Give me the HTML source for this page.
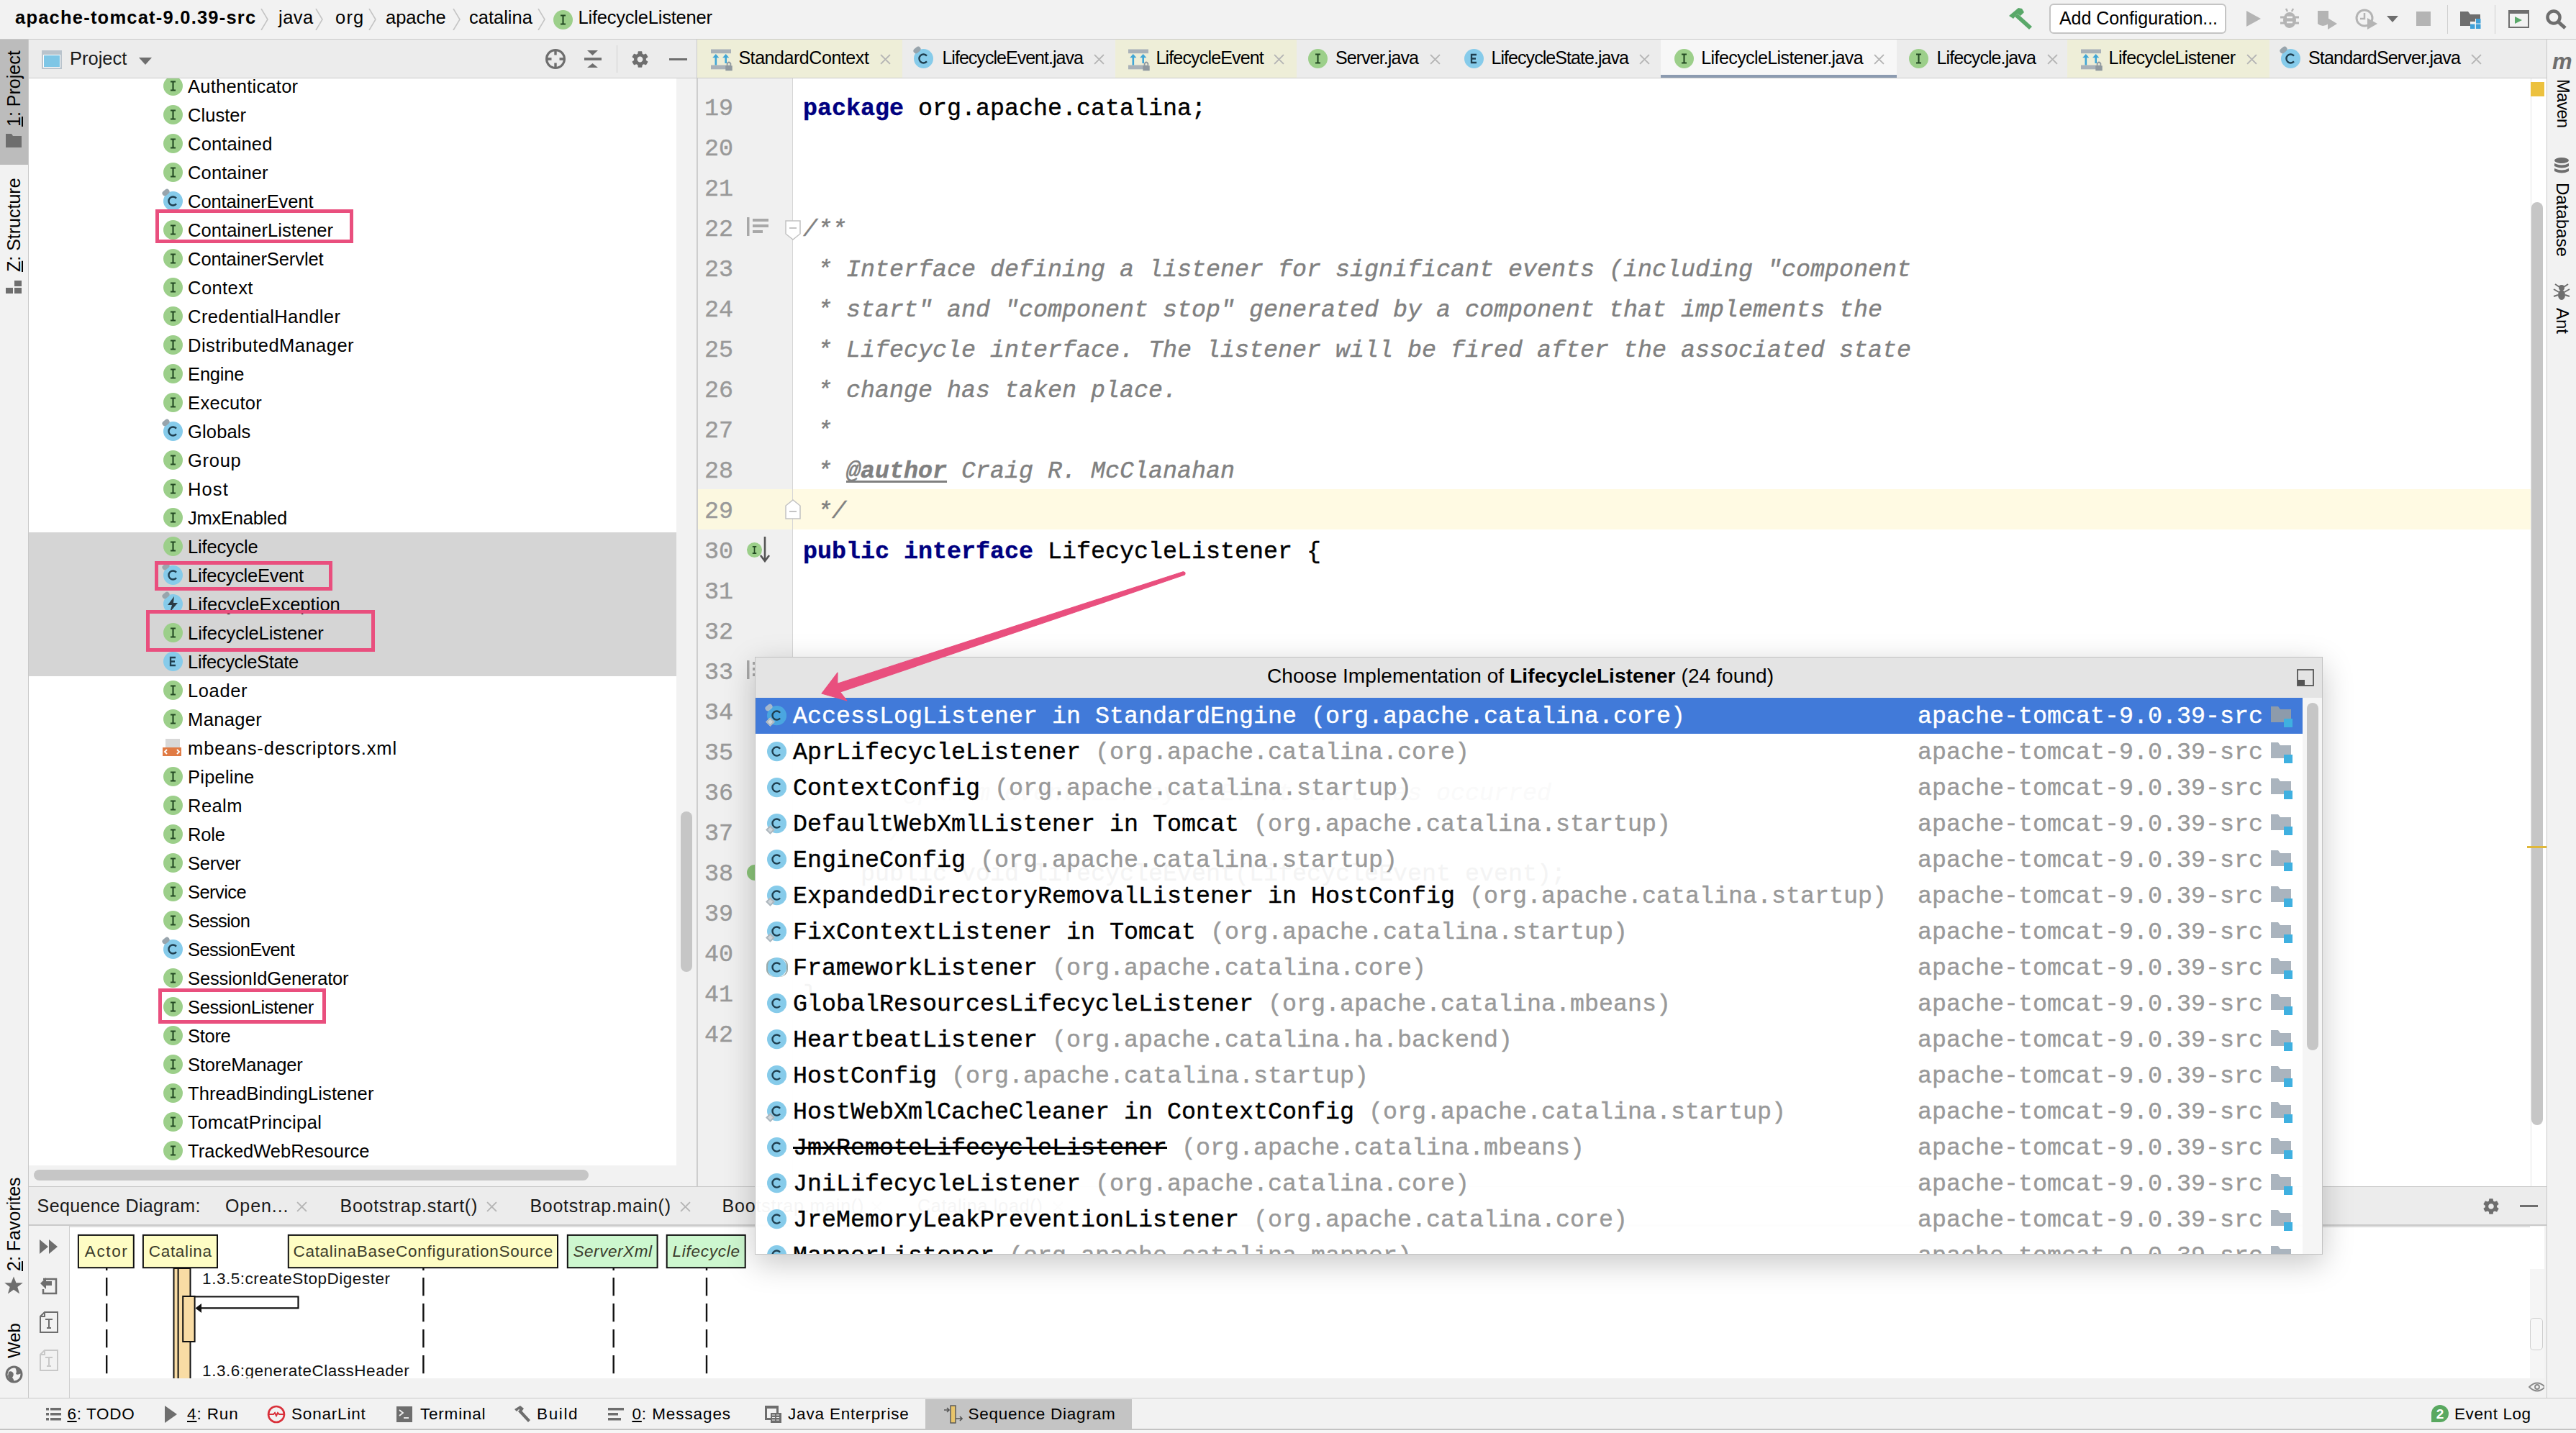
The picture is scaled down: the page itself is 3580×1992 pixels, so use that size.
<!DOCTYPE html><html><head><meta charset="utf-8"><style>

html,body{margin:0;padding:0;}
body{width:3580px;height:1992px;position:relative;overflow:hidden;background:#f2f2f2;font-family:"Liberation Sans",sans-serif;}
.a{position:absolute;}
.t{position:absolute;white-space:pre;line-height:1;}
.mono{-webkit-text-stroke:0.4px currentColor;}
.ic{border-radius:50%;text-align:center;font-family:"Liberation Sans",sans-serif;}
.vt{position:absolute;white-space:pre;line-height:1;transform-origin:0 0;}

</style></head><body>
<div class="a" style="left:0px;top:0px;width:3580px;height:54px;background:#f2f2f2;"></div>
<div class="a" style="left:0px;top:54px;width:3580px;height:1px;background:#cacaca;"></div>
<div class="t" style="left:21px;top:12.41px;font-family:'Liberation Sans', sans-serif;font-size:25.5px;color:#000;font-weight:bold;font-style:normal;letter-spacing:1.22px;">apache-tomcat-9.0.39-src</div>
<svg class="a" style="left:362px;top:12px" width="12" height="30" viewBox="0 0 12 30"><path d="M1 0L10 15.0L1 30" fill="none" stroke="#c4c4c4" stroke-width="1.6"/></svg>
<div class="t" style="left:387px;top:12.41px;font-family:'Liberation Sans', sans-serif;font-size:25.5px;color:#000;font-weight:normal;font-style:normal;letter-spacing:0.5px;">java</div>
<svg class="a" style="left:438px;top:12px" width="12" height="30" viewBox="0 0 12 30"><path d="M1 0L10 15.0L1 30" fill="none" stroke="#c4c4c4" stroke-width="1.6"/></svg>
<div class="t" style="left:466px;top:12.41px;font-family:'Liberation Sans', sans-serif;font-size:25.5px;color:#000;font-weight:normal;font-style:normal;letter-spacing:1.2px;">org</div>
<svg class="a" style="left:512px;top:12px" width="12" height="30" viewBox="0 0 12 30"><path d="M1 0L10 15.0L1 30" fill="none" stroke="#c4c4c4" stroke-width="1.6"/></svg>
<div class="t" style="left:536px;top:12.41px;font-family:'Liberation Sans', sans-serif;font-size:25.5px;color:#000;font-weight:normal;font-style:normal;letter-spacing:0px;">apache</div>
<svg class="a" style="left:629px;top:12px" width="12" height="30" viewBox="0 0 12 30"><path d="M1 0L10 15.0L1 30" fill="none" stroke="#c4c4c4" stroke-width="1.6"/></svg>
<div class="t" style="left:652px;top:12.41px;font-family:'Liberation Sans', sans-serif;font-size:25.5px;color:#000;font-weight:normal;font-style:normal;letter-spacing:0px;">catalina</div>
<svg class="a" style="left:747px;top:12px" width="12" height="30" viewBox="0 0 12 30"><path d="M1 0L10 15.0L1 30" fill="none" stroke="#c4c4c4" stroke-width="1.6"/></svg>
<svg class="a" style="left:768.5px;top:13.5px" width="27" height="27" viewBox="0 0 27 27"><circle cx="13.5" cy="13.5" r="13.5" fill="#9ccf8a"/><path d="M10 7.5H17M13.5 7.5V19.5M10 19.5H17" stroke="#234a23" stroke-width="2.1" fill="none"/></svg>
<div class="t" style="left:803.5px;top:12.41px;font-family:'Liberation Sans', sans-serif;font-size:25.5px;color:#000;font-weight:normal;font-style:normal;letter-spacing:-0.22px;">LifecycleListener</div>
<svg class="a" style="left:2792px;top:11px" width="34" height="30" viewBox="0 0 34 30"><path d="M0 11 L13 0 L18 1 L21 6 L16 11 L12 8 L6 15 Z" fill="#59a869"/><path d="M12 8 L32 26 L28 30 L8 12 Z" fill="#59a869"/></svg>
<div class="a" style="left:2848px;top:4.5px;width:246px;height:42.5px;background:#fff;border:2px solid #c4c4c4;border-radius:6px;box-sizing:border-box;"></div>
<div class="t" style="left:2862px;top:12.84px;font-family:'Liberation Sans', sans-serif;font-size:25px;color:#000;font-weight:normal;font-style:normal;letter-spacing:-0.05px;">Add Configuration...</div>
<svg class="a" style="left:3120px;top:13px" width="26" height="26" viewBox="0 0 26 26"><path d="M2 2L22 13L2 24Z" fill="#b4b4b4"/></svg>
<svg class="a" style="left:3169px;top:11px" width="26" height="29" viewBox="0 0 26 29"><path d="M8 1L10 5M18 1L16 5" stroke="#b4b4b4" stroke-width="2.5"/><ellipse cx="13" cy="17" rx="9" ry="11" fill="#b4b4b4"/><path d="M0 13H26M0 21H26" stroke="#b4b4b4" stroke-width="3"/><path d="M9 13H17M9 20H17" stroke="#f2f2f2" stroke-width="2.5"/></svg>
<svg class="a" style="left:3218px;top:11px" width="34" height="32" viewBox="0 0 34 32"><path d="M3 4 H18 V22 Q10 28 3 22 Z" fill="#b4b4b4"/><path d="M17 14 L30 22 L17 30 Z" fill="#b4b4b4"/></svg>
<svg class="a" style="left:3272px;top:11px" width="34" height="32" viewBox="0 0 34 32"><circle cx="14" cy="14" r="11" fill="none" stroke="#b4b4b4" stroke-width="3"/><path d="M14 7V15H8" stroke="#b4b4b4" stroke-width="2.5" fill="none"/><path d="M18 14 L32 22 L18 30 Z" fill="#b4b4b4"/></svg>
<svg class="a" style="left:3317px;top:22px" width="16" height="10" viewBox="0 0 16 10"><path d="M0 0H16L8 9Z" fill="#6e6e6e"/></svg>
<div class="a" style="left:3358px;top:16px;width:20px;height:20px;background:#b4b4b4;"></div>
<div class="a" style="left:3401px;top:7px;width:1px;height:40px;background:#d0d0d0;"></div>
<svg class="a" style="left:3419px;top:16px" width="30" height="24" viewBox="0 0 30 24"><path d="M0 0H11L14 4H28V10H21V14H14V20H0Z" fill="#6e6e6e"/><rect x="14" y="17.5" width="6.5" height="6.5" fill="#40a0d8"/><rect x="22" y="10" width="6.5" height="6.5" fill="#40a0d8"/><rect x="22" y="17.5" width="6.5" height="6.5" fill="#40a0d8"/></svg>
<div class="a" style="left:3467px;top:7px;width:1px;height:40px;background:#d0d0d0;"></div>
<svg class="a" style="left:3486px;top:14px" width="30" height="26" viewBox="0 0 30 26"><rect x="1" y="1" width="27" height="23" fill="none" stroke="#6e6e6e" stroke-width="2"/><rect x="1" y="1" width="27" height="4" fill="#6e6e6e"/><path d="M9 9L19 14L9 19Z" fill="#59a869"/></svg>
<svg class="a" style="left:3537px;top:12px" width="32" height="32" viewBox="0 0 32 32"><circle cx="12" cy="12" r="8.5" fill="none" stroke="#6e6e6e" stroke-width="4.5"/><path d="M18 18L28 27" stroke="#6e6e6e" stroke-width="5"/></svg>
<div class="a" style="left:0px;top:55px;width:39px;height:1888px;background:#f2f2f2;"></div>
<div class="a" style="left:39px;top:55px;width:1px;height:1888px;background:#c9c9c9;"></div>
<div class="a" style="left:0px;top:55px;width:39px;height:174px;background:#bcbcbc;"></div>
<div class="vt" style="left:7px;top:176px;font-size:25px;color:#000;transform:rotate(-90deg);"><u>1</u>: Project</div>
<svg class="a" style="left:8px;top:186px" width="22" height="19" viewBox="0 0 22 19"><path d="M0 0H8L10 3H22V19H0Z" fill="#6e6e6e"/></svg>
<div class="vt" style="left:7px;top:378px;font-size:25px;color:#000;transform:rotate(-90deg);"><u>Z</u>: Structure</div>
<svg class="a" style="left:8px;top:390px" width="22" height="18" viewBox="0 0 22 18"><rect x="12" y="0" width="10" height="8" fill="#6e6e6e"/><rect x="0" y="10" width="10" height="8" fill="#6e6e6e"/><rect x="12" y="10" width="10" height="8" fill="#6e6e6e"/></svg>
<div class="vt" style="left:7px;top:1767px;font-size:25px;color:#000;transform:rotate(-90deg);"><u>2</u>: Favorites</div>
<svg class="a" style="left:6px;top:1774px" width="26" height="26" viewBox="0 0 24 24"><path d="M12 0.5L15.2 8.6H23.8L16.9 13.9L19.5 22.5L12 17.2L4.5 22.5L7.1 13.9L0.2 8.6H8.8Z" fill="#6e6e6e"/></svg>
<div class="vt" style="left:8px;top:1888px;font-size:24px;color:#000;transform:rotate(-90deg);">Web</div>
<svg class="a" style="left:7px;top:1898px" width="25" height="25" viewBox="0 0 25 25"><circle cx="12.5" cy="12.5" r="10.5" fill="none" stroke="#6e6e6e" stroke-width="3"/><path d="M5 9Q9 7 11 10T10 17Q13 20 12 23Q6 21 4 15Z M14 3Q20 5 22 11Q18 14 15 12Q17 8 14 3Z" fill="#6e6e6e"/></svg>
<div class="a" style="left:40px;top:109px;width:900px;height:1511px;background:#ffffff;"></div>
<div class="a" style="left:40px;top:739.5px;width:900px;height:200px;background:#d5d5d5;"></div>
<div class="a" style="left:40px;top:109px;width:900px;height:1511px;overflow:hidden;">
<svg class="a" style="left:186.5px;top:-3.0px" width="27" height="27" viewBox="0 0 27 27"><circle cx="13.5" cy="13.5" r="13.5" fill="#9ccf8a"/><path d="M10 7.5H17M13.5 7.5V19.5M10 19.5H17" stroke="#234a23" stroke-width="2.1" fill="none"/></svg>
<div class="t" style="left:221.1px;top:-1.49px;font-family:'Liberation Sans', sans-serif;font-size:25.5px;color:#000;font-weight:normal;font-style:normal;letter-spacing:0.225px;">Authenticator</div>
<svg class="a" style="left:186.5px;top:37.0px" width="27" height="27" viewBox="0 0 27 27"><circle cx="13.5" cy="13.5" r="13.5" fill="#9ccf8a"/><path d="M10 7.5H17M13.5 7.5V19.5M10 19.5H17" stroke="#234a23" stroke-width="2.1" fill="none"/></svg>
<div class="t" style="left:221.1px;top:38.51px;font-family:'Liberation Sans', sans-serif;font-size:25.5px;color:#000;font-weight:normal;font-style:normal;letter-spacing:0.017px;">Cluster</div>
<svg class="a" style="left:186.5px;top:77.0px" width="27" height="27" viewBox="0 0 27 27"><circle cx="13.5" cy="13.5" r="13.5" fill="#9ccf8a"/><path d="M10 7.5H17M13.5 7.5V19.5M10 19.5H17" stroke="#234a23" stroke-width="2.1" fill="none"/></svg>
<div class="t" style="left:221.1px;top:78.51px;font-family:'Liberation Sans', sans-serif;font-size:25.5px;color:#000;font-weight:normal;font-style:normal;letter-spacing:0.125px;">Contained</div>
<svg class="a" style="left:186.5px;top:117.0px" width="27" height="27" viewBox="0 0 27 27"><circle cx="13.5" cy="13.5" r="13.5" fill="#9ccf8a"/><path d="M10 7.5H17M13.5 7.5V19.5M10 19.5H17" stroke="#234a23" stroke-width="2.1" fill="none"/></svg>
<div class="t" style="left:221.1px;top:118.51px;font-family:'Liberation Sans', sans-serif;font-size:25.5px;color:#000;font-weight:normal;font-style:normal;letter-spacing:0.1px;">Container</div>
<svg class="a" style="left:186.5px;top:157.0px" width="27" height="27" viewBox="0 0 27 27"><circle cx="13.5" cy="13.5" r="13.5" fill="#86cbea"/><path d="M18 9.6A6 6 0 1 0 18 17.4" stroke="#1f3f50" stroke-width="2.4" fill="none"/></svg>
<div class="a" style="left:185.0px;top:154.5px;width:11px;height:7px;background:#98a4ac;border-radius:4px;transform:rotate(-40deg);"></div>
<div class="t" style="left:221.1px;top:158.51px;font-family:'Liberation Sans', sans-serif;font-size:25.5px;color:#000;font-weight:normal;font-style:normal;letter-spacing:-0.108px;">ContainerEvent</div>
<svg class="a" style="left:186.5px;top:197.0px" width="27" height="27" viewBox="0 0 27 27"><circle cx="13.5" cy="13.5" r="13.5" fill="#9ccf8a"/><path d="M10 7.5H17M13.5 7.5V19.5M10 19.5H17" stroke="#234a23" stroke-width="2.1" fill="none"/></svg>
<div class="t" style="left:221.1px;top:198.51px;font-family:'Liberation Sans', sans-serif;font-size:25.5px;color:#000;font-weight:normal;font-style:normal;letter-spacing:0.044px;">ContainerListener</div>
<svg class="a" style="left:186.5px;top:237.0px" width="27" height="27" viewBox="0 0 27 27"><circle cx="13.5" cy="13.5" r="13.5" fill="#9ccf8a"/><path d="M10 7.5H17M13.5 7.5V19.5M10 19.5H17" stroke="#234a23" stroke-width="2.1" fill="none"/></svg>
<div class="t" style="left:221.1px;top:238.51px;font-family:'Liberation Sans', sans-serif;font-size:25.5px;color:#000;font-weight:normal;font-style:normal;letter-spacing:-0.093px;">ContainerServlet</div>
<svg class="a" style="left:186.5px;top:277.0px" width="27" height="27" viewBox="0 0 27 27"><circle cx="13.5" cy="13.5" r="13.5" fill="#9ccf8a"/><path d="M10 7.5H17M13.5 7.5V19.5M10 19.5H17" stroke="#234a23" stroke-width="2.1" fill="none"/></svg>
<div class="t" style="left:221.1px;top:278.51px;font-family:'Liberation Sans', sans-serif;font-size:25.5px;color:#000;font-weight:normal;font-style:normal;letter-spacing:0.4px;">Context</div>
<svg class="a" style="left:186.5px;top:317.0px" width="27" height="27" viewBox="0 0 27 27"><circle cx="13.5" cy="13.5" r="13.5" fill="#9ccf8a"/><path d="M10 7.5H17M13.5 7.5V19.5M10 19.5H17" stroke="#234a23" stroke-width="2.1" fill="none"/></svg>
<div class="t" style="left:221.1px;top:318.51px;font-family:'Liberation Sans', sans-serif;font-size:25.5px;color:#000;font-weight:normal;font-style:normal;letter-spacing:0.394px;">CredentialHandler</div>
<svg class="a" style="left:186.5px;top:357.0px" width="27" height="27" viewBox="0 0 27 27"><circle cx="13.5" cy="13.5" r="13.5" fill="#9ccf8a"/><path d="M10 7.5H17M13.5 7.5V19.5M10 19.5H17" stroke="#234a23" stroke-width="2.1" fill="none"/></svg>
<div class="t" style="left:221.1px;top:358.51px;font-family:'Liberation Sans', sans-serif;font-size:25.5px;color:#000;font-weight:normal;font-style:normal;letter-spacing:0.465px;">DistributedManager</div>
<svg class="a" style="left:186.5px;top:397.0px" width="27" height="27" viewBox="0 0 27 27"><circle cx="13.5" cy="13.5" r="13.5" fill="#9ccf8a"/><path d="M10 7.5H17M13.5 7.5V19.5M10 19.5H17" stroke="#234a23" stroke-width="2.1" fill="none"/></svg>
<div class="t" style="left:221.1px;top:398.51px;font-family:'Liberation Sans', sans-serif;font-size:25.5px;color:#000;font-weight:normal;font-style:normal;letter-spacing:-0.22px;">Engine</div>
<svg class="a" style="left:186.5px;top:437.0px" width="27" height="27" viewBox="0 0 27 27"><circle cx="13.5" cy="13.5" r="13.5" fill="#9ccf8a"/><path d="M10 7.5H17M13.5 7.5V19.5M10 19.5H17" stroke="#234a23" stroke-width="2.1" fill="none"/></svg>
<div class="t" style="left:221.1px;top:438.51px;font-family:'Liberation Sans', sans-serif;font-size:25.5px;color:#000;font-weight:normal;font-style:normal;letter-spacing:0.286px;">Executor</div>
<svg class="a" style="left:186.5px;top:477.0px" width="27" height="27" viewBox="0 0 27 27"><circle cx="13.5" cy="13.5" r="13.5" fill="#86cbea"/><path d="M18 9.6A6 6 0 1 0 18 17.4" stroke="#1f3f50" stroke-width="2.4" fill="none"/></svg>
<div class="a" style="left:185.0px;top:474.5px;width:11px;height:7px;background:#98a4ac;border-radius:4px;transform:rotate(-40deg);"></div>
<div class="t" style="left:221.1px;top:478.51px;font-family:'Liberation Sans', sans-serif;font-size:25.5px;color:#000;font-weight:normal;font-style:normal;letter-spacing:0.117px;">Globals</div>
<svg class="a" style="left:186.5px;top:517.0px" width="27" height="27" viewBox="0 0 27 27"><circle cx="13.5" cy="13.5" r="13.5" fill="#9ccf8a"/><path d="M10 7.5H17M13.5 7.5V19.5M10 19.5H17" stroke="#234a23" stroke-width="2.1" fill="none"/></svg>
<div class="t" style="left:221.1px;top:518.51px;font-family:'Liberation Sans', sans-serif;font-size:25.5px;color:#000;font-weight:normal;font-style:normal;letter-spacing:0.675px;">Group</div>
<svg class="a" style="left:186.5px;top:557.0px" width="27" height="27" viewBox="0 0 27 27"><circle cx="13.5" cy="13.5" r="13.5" fill="#9ccf8a"/><path d="M10 7.5H17M13.5 7.5V19.5M10 19.5H17" stroke="#234a23" stroke-width="2.1" fill="none"/></svg>
<div class="t" style="left:221.1px;top:558.51px;font-family:'Liberation Sans', sans-serif;font-size:25.5px;color:#000;font-weight:normal;font-style:normal;letter-spacing:1.067px;">Host</div>
<svg class="a" style="left:186.5px;top:597.0px" width="27" height="27" viewBox="0 0 27 27"><circle cx="13.5" cy="13.5" r="13.5" fill="#9ccf8a"/><path d="M10 7.5H17M13.5 7.5V19.5M10 19.5H17" stroke="#234a23" stroke-width="2.1" fill="none"/></svg>
<div class="t" style="left:221.1px;top:598.51px;font-family:'Liberation Sans', sans-serif;font-size:25.5px;color:#000;font-weight:normal;font-style:normal;letter-spacing:-0.244px;">JmxEnabled</div>
<svg class="a" style="left:186.5px;top:637.0px" width="27" height="27" viewBox="0 0 27 27"><circle cx="13.5" cy="13.5" r="13.5" fill="#9ccf8a"/><path d="M10 7.5H17M13.5 7.5V19.5M10 19.5H17" stroke="#234a23" stroke-width="2.1" fill="none"/></svg>
<div class="t" style="left:221.1px;top:638.51px;font-family:'Liberation Sans', sans-serif;font-size:25.5px;color:#000;font-weight:normal;font-style:normal;letter-spacing:-0.2px;">Lifecycle</div>
<svg class="a" style="left:186.5px;top:677.0px" width="27" height="27" viewBox="0 0 27 27"><circle cx="13.5" cy="13.5" r="13.5" fill="#86cbea"/><path d="M18 9.6A6 6 0 1 0 18 17.4" stroke="#1f3f50" stroke-width="2.4" fill="none"/></svg>
<div class="a" style="left:185.0px;top:674.5px;width:11px;height:7px;background:#98a4ac;border-radius:4px;transform:rotate(-40deg);"></div>
<div class="t" style="left:221.1px;top:678.51px;font-family:'Liberation Sans', sans-serif;font-size:25.5px;color:#000;font-weight:normal;font-style:normal;letter-spacing:-0.262px;">LifecycleEvent</div>
<div class="a ic" style="left:186.5px;top:717.0px;width:27px;height:27px;background:#86cbea;"></div>
<svg class="a" style="left:191px;top:719.5px" width="18" height="22" viewBox="0 0 18 22"><path d="M11 0L2 12H8L5 22L16 9H10Z" fill="#2a3a44"/></svg>
<div class="a" style="left:185px;top:714.5px;width:11px;height:7px;background:#98a4ac;border-radius:4px;transform:rotate(-40deg);"></div>
<div class="t" style="left:221.1px;top:718.51px;font-family:'Liberation Sans', sans-serif;font-size:25.5px;color:#000;font-weight:normal;font-style:normal;letter-spacing:0.029px;">LifecycleException</div>
<svg class="a" style="left:186.5px;top:757.0px" width="27" height="27" viewBox="0 0 27 27"><circle cx="13.5" cy="13.5" r="13.5" fill="#9ccf8a"/><path d="M10 7.5H17M13.5 7.5V19.5M10 19.5H17" stroke="#234a23" stroke-width="2.1" fill="none"/></svg>
<div class="t" style="left:221.1px;top:758.51px;font-family:'Liberation Sans', sans-serif;font-size:25.5px;color:#000;font-weight:normal;font-style:normal;letter-spacing:-0.081px;">LifecycleListener</div>
<svg class="a" style="left:186.5px;top:797.0px" width="27" height="27" viewBox="0 0 27 27"><circle cx="13.5" cy="13.5" r="13.5" fill="#86cbea"/><path d="M17 8H10V19H17M10 13.5H16" stroke="#1f3f50" stroke-width="2.3" fill="none"/></svg>
<div class="t" style="left:221.1px;top:798.51px;font-family:'Liberation Sans', sans-serif;font-size:25.5px;color:#000;font-weight:normal;font-style:normal;letter-spacing:-0.362px;">LifecycleState</div>
<svg class="a" style="left:186.5px;top:837.0px" width="27" height="27" viewBox="0 0 27 27"><circle cx="13.5" cy="13.5" r="13.5" fill="#9ccf8a"/><path d="M10 7.5H17M13.5 7.5V19.5M10 19.5H17" stroke="#234a23" stroke-width="2.1" fill="none"/></svg>
<div class="t" style="left:221.1px;top:838.51px;font-family:'Liberation Sans', sans-serif;font-size:25.5px;color:#000;font-weight:normal;font-style:normal;letter-spacing:0.58px;">Loader</div>
<svg class="a" style="left:186.5px;top:877.0px" width="27" height="27" viewBox="0 0 27 27"><circle cx="13.5" cy="13.5" r="13.5" fill="#9ccf8a"/><path d="M10 7.5H17M13.5 7.5V19.5M10 19.5H17" stroke="#234a23" stroke-width="2.1" fill="none"/></svg>
<div class="t" style="left:221.1px;top:878.51px;font-family:'Liberation Sans', sans-serif;font-size:25.5px;color:#000;font-weight:normal;font-style:normal;letter-spacing:0.333px;">Manager</div>
<svg class="a" style="left:186px;top:917.5px" width="28" height="26" viewBox="0 0 28 26"><rect x="4" y="0" width="20" height="24" fill="#d8d8d8"/><rect x="0" y="12" width="26" height="12" fill="#e07b45"/><path d="M6 15L3 18L6 21M20 15L23 18L20 21" stroke="#fff" stroke-width="2" fill="none"/></svg>
<div class="t" style="left:221.1px;top:918.51px;font-family:'Liberation Sans', sans-serif;font-size:25.5px;color:#000;font-weight:normal;font-style:normal;letter-spacing:0.924px;">mbeans-descriptors.xml</div>
<svg class="a" style="left:186.5px;top:957.0px" width="27" height="27" viewBox="0 0 27 27"><circle cx="13.5" cy="13.5" r="13.5" fill="#9ccf8a"/><path d="M10 7.5H17M13.5 7.5V19.5M10 19.5H17" stroke="#234a23" stroke-width="2.1" fill="none"/></svg>
<div class="t" style="left:221.1px;top:958.51px;font-family:'Liberation Sans', sans-serif;font-size:25.5px;color:#000;font-weight:normal;font-style:normal;letter-spacing:0.2px;">Pipeline</div>
<svg class="a" style="left:186.5px;top:997.0px" width="27" height="27" viewBox="0 0 27 27"><circle cx="13.5" cy="13.5" r="13.5" fill="#9ccf8a"/><path d="M10 7.5H17M13.5 7.5V19.5M10 19.5H17" stroke="#234a23" stroke-width="2.1" fill="none"/></svg>
<div class="t" style="left:221.1px;top:998.51px;font-family:'Liberation Sans', sans-serif;font-size:25.5px;color:#000;font-weight:normal;font-style:normal;letter-spacing:0.4px;">Realm</div>
<svg class="a" style="left:186.5px;top:1037.0px" width="27" height="27" viewBox="0 0 27 27"><circle cx="13.5" cy="13.5" r="13.5" fill="#9ccf8a"/><path d="M10 7.5H17M13.5 7.5V19.5M10 19.5H17" stroke="#234a23" stroke-width="2.1" fill="none"/></svg>
<div class="t" style="left:221.1px;top:1038.51px;font-family:'Liberation Sans', sans-serif;font-size:25.5px;color:#000;font-weight:normal;font-style:normal;letter-spacing:-0.2px;">Role</div>
<svg class="a" style="left:186.5px;top:1077.0px" width="27" height="27" viewBox="0 0 27 27"><circle cx="13.5" cy="13.5" r="13.5" fill="#9ccf8a"/><path d="M10 7.5H17M13.5 7.5V19.5M10 19.5H17" stroke="#234a23" stroke-width="2.1" fill="none"/></svg>
<div class="t" style="left:221.1px;top:1078.51px;font-family:'Liberation Sans', sans-serif;font-size:25.5px;color:#000;font-weight:normal;font-style:normal;letter-spacing:-0.28px;">Server</div>
<svg class="a" style="left:186.5px;top:1117.0px" width="27" height="27" viewBox="0 0 27 27"><circle cx="13.5" cy="13.5" r="13.5" fill="#9ccf8a"/><path d="M10 7.5H17M13.5 7.5V19.5M10 19.5H17" stroke="#234a23" stroke-width="2.1" fill="none"/></svg>
<div class="t" style="left:221.1px;top:1118.51px;font-family:'Liberation Sans', sans-serif;font-size:25.5px;color:#000;font-weight:normal;font-style:normal;letter-spacing:-0.583px;">Service</div>
<svg class="a" style="left:186.5px;top:1157.0px" width="27" height="27" viewBox="0 0 27 27"><circle cx="13.5" cy="13.5" r="13.5" fill="#9ccf8a"/><path d="M10 7.5H17M13.5 7.5V19.5M10 19.5H17" stroke="#234a23" stroke-width="2.1" fill="none"/></svg>
<div class="t" style="left:221.1px;top:1158.51px;font-family:'Liberation Sans', sans-serif;font-size:25.5px;color:#000;font-weight:normal;font-style:normal;letter-spacing:-0.667px;">Session</div>
<svg class="a" style="left:186.5px;top:1197.0px" width="27" height="27" viewBox="0 0 27 27"><circle cx="13.5" cy="13.5" r="13.5" fill="#86cbea"/><path d="M18 9.6A6 6 0 1 0 18 17.4" stroke="#1f3f50" stroke-width="2.4" fill="none"/></svg>
<div class="a" style="left:185.0px;top:1194.5px;width:11px;height:7px;background:#98a4ac;border-radius:4px;transform:rotate(-40deg);"></div>
<div class="t" style="left:221.1px;top:1198.51px;font-family:'Liberation Sans', sans-serif;font-size:25.5px;color:#000;font-weight:normal;font-style:normal;letter-spacing:-0.664px;">SessionEvent</div>
<svg class="a" style="left:186.5px;top:1237.0px" width="27" height="27" viewBox="0 0 27 27"><circle cx="13.5" cy="13.5" r="13.5" fill="#9ccf8a"/><path d="M10 7.5H17M13.5 7.5V19.5M10 19.5H17" stroke="#234a23" stroke-width="2.1" fill="none"/></svg>
<div class="t" style="left:221.1px;top:1238.51px;font-family:'Liberation Sans', sans-serif;font-size:25.5px;color:#000;font-weight:normal;font-style:normal;letter-spacing:-0.2px;">SessionIdGenerator</div>
<svg class="a" style="left:186.5px;top:1277.0px" width="27" height="27" viewBox="0 0 27 27"><circle cx="13.5" cy="13.5" r="13.5" fill="#9ccf8a"/><path d="M10 7.5H17M13.5 7.5V19.5M10 19.5H17" stroke="#234a23" stroke-width="2.1" fill="none"/></svg>
<div class="t" style="left:221.1px;top:1278.51px;font-family:'Liberation Sans', sans-serif;font-size:25.5px;color:#000;font-weight:normal;font-style:normal;letter-spacing:-0.443px;">SessionListener</div>
<svg class="a" style="left:186.5px;top:1317.0px" width="27" height="27" viewBox="0 0 27 27"><circle cx="13.5" cy="13.5" r="13.5" fill="#9ccf8a"/><path d="M10 7.5H17M13.5 7.5V19.5M10 19.5H17" stroke="#234a23" stroke-width="2.1" fill="none"/></svg>
<div class="t" style="left:221.1px;top:1318.51px;font-family:'Liberation Sans', sans-serif;font-size:25.5px;color:#000;font-weight:normal;font-style:normal;letter-spacing:-0.325px;">Store</div>
<svg class="a" style="left:186.5px;top:1357.0px" width="27" height="27" viewBox="0 0 27 27"><circle cx="13.5" cy="13.5" r="13.5" fill="#9ccf8a"/><path d="M10 7.5H17M13.5 7.5V19.5M10 19.5H17" stroke="#234a23" stroke-width="2.1" fill="none"/></svg>
<div class="t" style="left:221.1px;top:1358.51px;font-family:'Liberation Sans', sans-serif;font-size:25.5px;color:#000;font-weight:normal;font-style:normal;letter-spacing:-0.182px;">StoreManager</div>
<svg class="a" style="left:186.5px;top:1397.0px" width="27" height="27" viewBox="0 0 27 27"><circle cx="13.5" cy="13.5" r="13.5" fill="#9ccf8a"/><path d="M10 7.5H17M13.5 7.5V19.5M10 19.5H17" stroke="#234a23" stroke-width="2.1" fill="none"/></svg>
<div class="t" style="left:221.1px;top:1398.51px;font-family:'Liberation Sans', sans-serif;font-size:25.5px;color:#000;font-weight:normal;font-style:normal;letter-spacing:0.085px;">ThreadBindingListener</div>
<svg class="a" style="left:186.5px;top:1437.0px" width="27" height="27" viewBox="0 0 27 27"><circle cx="13.5" cy="13.5" r="13.5" fill="#9ccf8a"/><path d="M10 7.5H17M13.5 7.5V19.5M10 19.5H17" stroke="#234a23" stroke-width="2.1" fill="none"/></svg>
<div class="t" style="left:221.1px;top:1438.51px;font-family:'Liberation Sans', sans-serif;font-size:25.5px;color:#000;font-weight:normal;font-style:normal;letter-spacing:0.421px;">TomcatPrincipal</div>
<svg class="a" style="left:186.5px;top:1477.0px" width="27" height="27" viewBox="0 0 27 27"><circle cx="13.5" cy="13.5" r="13.5" fill="#9ccf8a"/><path d="M10 7.5H17M13.5 7.5V19.5M10 19.5H17" stroke="#234a23" stroke-width="2.1" fill="none"/></svg>
<div class="t" style="left:221.1px;top:1478.51px;font-family:'Liberation Sans', sans-serif;font-size:25.5px;color:#000;font-weight:normal;font-style:normal;letter-spacing:0.0px;">TrackedWebResource</div>
</div>
<div class="a" style="left:940px;top:109px;width:28px;height:1511px;background:#f2f2f2;"></div>
<div class="a" style="left:946px;top:1128px;width:15.5px;height:223px;background:#c6c6c6;border-radius:8px;"></div>
<div class="a" style="left:40px;top:1620px;width:928px;height:29px;background:#f2f2f2;"></div>
<div class="a" style="left:47px;top:1626px;width:771px;height:15px;background:#c6c6c6;border-radius:8px;"></div>
<div class="a" style="left:968px;top:55px;width:1px;height:1594px;background:#c9c9c9;"></div>
<div class="a" style="left:40px;top:55px;width:928px;height:54px;background:#ececec;"></div>
<div class="a" style="left:40px;top:108px;width:928px;height:1px;background:#c9c9c9;"></div>
<svg class="a" style="left:58px;top:70px" width="28" height="26" viewBox="0 0 28 26"><rect x="0" y="0" width="28" height="26" fill="#b9c3cc"/><rect x="2" y="6" width="24" height="18" fill="#ffffff"/><rect x="3" y="7" width="22" height="16" fill="#7ec6e6"/></svg>
<div class="t" style="left:97px;top:69.41px;font-family:'Liberation Sans', sans-serif;font-size:25.5px;color:#1a1a1a;font-weight:normal;font-style:normal;letter-spacing:0px;">Project</div>
<svg class="a" style="left:193px;top:80px" width="18" height="11" viewBox="0 0 18 11"><path d="M0 0H18L9 10Z" fill="#6e6e6e"/></svg>
<svg class="a" style="left:757px;top:67px" width="30" height="30" viewBox="0 0 30 30"><circle cx="15" cy="15" r="12.4" fill="none" stroke="#6e6e6e" stroke-width="3.2"/><path d="M15 2V9.5M15 20.5V28M2 15H9.5M20.5 15H28" stroke="#6e6e6e" stroke-width="3.4"/></svg>
<svg class="a" style="left:812px;top:69px" width="25" height="26" viewBox="0 0 25 26"><rect x="0" y="11.2" width="24" height="3.7" fill="#6e6e6e"/><path d="M4 1H19L11.5 8Z M4 25H19L11.5 19Z" fill="#6e6e6e"/></svg>
<div class="a" style="left:857px;top:63px;width:1px;height:38px;background:#d0d0d0;"></div>
<svg class="a" style="left:876px;top:69px" width="27" height="27" viewBox="0 0 24 24"><path fill="#6e6e6e" d="M19.4 13c.04-.33.06-.66.06-1s-.02-.67-.06-1l2.1-1.65c.19-.15.24-.42.12-.64l-2-3.46c-.12-.22-.39-.3-.61-.22l-2.49 1c-.52-.4-1.08-.73-1.69-.98l-.38-2.65C14.46 2.18 14.25 2 14 2h-4c-.25 0-.46.18-.49.42l-.38 2.65c-.61.25-1.17.59-1.69.98l-2.49-1c-.23-.09-.49 0-.61.22l-2 3.46c-.13.22-.07.49.12.64L4.57 11c-.04.33-.07.67-.07 1s.03.67.07 1l-2.11 1.65c-.19.15-.24.42-.12.64l2 3.46c.12.22.39.3.61.22l2.49-1c.52.4 1.08.73 1.69.98l.38 2.65c.03.24.24.42.49.42h4c.25 0 .46-.18.49-.42l.38-2.65c.61-.25 1.17-.59 1.69-.98l2.49 1c.23.09.49 0 .61-.22l2-3.46c.12-.22.07-.49-.12-.64L19.4 13zM12 15.5c-1.93 0-3.5-1.57-3.5-3.5s1.57-3.5 3.5-3.5 3.5 1.57 3.5 3.5-1.57 3.5-3.5 3.5z"/></svg>
<div class="a" style="left:930px;top:81px;width:25px;height:3px;background:#6e6e6e;"></div>
<div class="a" style="left:969px;top:55px;width:2571px;height:53px;background:#ececec;"></div>
<div class="a" style="left:969px;top:55px;width:285px;height:53px;background:#eeeed8;"></div>
<svg class="a" style="left:988px;top:66.5px" width="32" height="32" viewBox="0 0 32 32"><rect x="0" y="1.5" width="28" height="5.7" fill="#a9b1b8"/><rect x="0" y="23.5" width="28" height="5.8" fill="#a9b1b8"/><path d="M2.2 13.3L6.8 7.9L11.4 13.3Z M16.1 13.3L20.7 7.9L25.3 13.3Z" fill="#40a6d6"/><rect x="5.5" y="13" width="2.6" height="10.5" fill="#40a6d6"/><rect x="19.4" y="13" width="2.6" height="8" fill="#40a6d6"/><rect x="20.3" y="24.3" width="9.4" height="7" fill="#8f989f"/><path d="M22.6 24.5V21.5Q25 17.5 27.4 21.5V24.5" stroke="#8f989f" stroke-width="1.8" fill="none"/></svg>
<div class="t" style="left:1026.4px;top:68.34px;font-family:'Liberation Sans', sans-serif;font-size:25px;color:#000;font-weight:normal;font-style:normal;letter-spacing:-0.442px;">StandardContext</div>
<svg class="a" style="left:1222.5px;top:74.5px" width="15" height="15" viewBox="0 0 14 14"><path d="M1 1L13 13M13 1L1 13" stroke="#b5b5b5" stroke-width="1.8"/></svg>
<div class="a" style="left:1254px;top:55px;width:296px;height:53px;background:#ececec;"></div>
<svg class="a" style="left:1270.0px;top:68.0px" width="27" height="27" viewBox="0 0 27 27"><circle cx="13.5" cy="13.5" r="13.5" fill="#86cbea"/><path d="M18 9.6A6 6 0 1 0 18 17.4" stroke="#1f3f50" stroke-width="2.4" fill="none"/></svg>
<div class="a" style="left:1268.5px;top:65.5px;width:11px;height:7px;background:#98a4ac;border-radius:4px;transform:rotate(-40deg);"></div>
<div class="t" style="left:1309.4px;top:68.34px;font-family:'Liberation Sans', sans-serif;font-size:25px;color:#000;font-weight:normal;font-style:normal;letter-spacing:-0.969px;">LifecycleEvent.java</div>
<svg class="a" style="left:1520.3px;top:74.5px" width="15" height="15" viewBox="0 0 14 14"><path d="M1 1L13 13M13 1L1 13" stroke="#b5b5b5" stroke-width="1.8"/></svg>
<div class="a" style="left:1550px;top:55px;width:252px;height:53px;background:#eeeed8;"></div>
<svg class="a" style="left:1568px;top:66.5px" width="32" height="32" viewBox="0 0 32 32"><rect x="0" y="1.5" width="28" height="5.7" fill="#a9b1b8"/><rect x="0" y="23.5" width="28" height="5.8" fill="#a9b1b8"/><path d="M2.2 13.3L6.8 7.9L11.4 13.3Z M16.1 13.3L20.7 7.9L25.3 13.3Z" fill="#40a6d6"/><rect x="5.5" y="13" width="2.6" height="10.5" fill="#40a6d6"/><rect x="19.4" y="13" width="2.6" height="8" fill="#40a6d6"/><rect x="20.3" y="24.3" width="9.4" height="7" fill="#8f989f"/><path d="M22.6 24.5V21.5Q25 17.5 27.4 21.5V24.5" stroke="#8f989f" stroke-width="1.8" fill="none"/></svg>
<div class="t" style="left:1606.4px;top:68.34px;font-family:'Liberation Sans', sans-serif;font-size:25px;color:#000;font-weight:normal;font-style:normal;letter-spacing:-0.828px;">LifecycleEvent</div>
<svg class="a" style="left:1770.1px;top:74.5px" width="15" height="15" viewBox="0 0 14 14"><path d="M1 1L13 13M13 1L1 13" stroke="#b5b5b5" stroke-width="1.8"/></svg>
<div class="a" style="left:1802px;top:55px;width:215px;height:53px;background:#ececec;"></div>
<svg class="a" style="left:1818.0px;top:68.0px" width="27" height="27" viewBox="0 0 27 27"><circle cx="13.5" cy="13.5" r="13.5" fill="#9ccf8a"/><path d="M10 7.5H17M13.5 7.5V19.5M10 19.5H17" stroke="#234a23" stroke-width="2.1" fill="none"/></svg>
<div class="t" style="left:1856px;top:68.34px;font-family:'Liberation Sans', sans-serif;font-size:25px;color:#000;font-weight:normal;font-style:normal;letter-spacing:-0.915px;">Server.java</div>
<svg class="a" style="left:1986.5px;top:74.5px" width="15" height="15" viewBox="0 0 14 14"><path d="M1 1L13 13M13 1L1 13" stroke="#b5b5b5" stroke-width="1.8"/></svg>
<div class="a" style="left:2017px;top:55px;width:291px;height:53px;background:#ececec;"></div>
<svg class="a" style="left:2034.5px;top:68.0px" width="27" height="27" viewBox="0 0 27 27"><circle cx="13.5" cy="13.5" r="13.5" fill="#86cbea"/><path d="M17 8H10V19H17M10 13.5H16" stroke="#1f3f50" stroke-width="2.3" fill="none"/></svg>
<div class="t" style="left:2072.5px;top:68.34px;font-family:'Liberation Sans', sans-serif;font-size:25px;color:#000;font-weight:normal;font-style:normal;letter-spacing:-0.945px;">LifecycleState.java</div>
<svg class="a" style="left:2278.2px;top:74.5px" width="15" height="15" viewBox="0 0 14 14"><path d="M1 1L13 13M13 1L1 13" stroke="#b5b5b5" stroke-width="1.8"/></svg>
<div class="a" style="left:2308px;top:55px;width:328px;height:53px;background:#f7f7f7;"></div>
<svg class="a" style="left:2326.5px;top:68.0px" width="27" height="27" viewBox="0 0 27 27"><circle cx="13.5" cy="13.5" r="13.5" fill="#9ccf8a"/><path d="M10 7.5H17M13.5 7.5V19.5M10 19.5H17" stroke="#234a23" stroke-width="2.1" fill="none"/></svg>
<div class="t" style="left:2364.3px;top:68.34px;font-family:'Liberation Sans', sans-serif;font-size:25px;color:#000;font-weight:normal;font-style:normal;letter-spacing:-0.588px;">LifecycleListener.java</div>
<svg class="a" style="left:2603.8px;top:74.5px" width="15" height="15" viewBox="0 0 14 14"><path d="M1 1L13 13M13 1L1 13" stroke="#b5b5b5" stroke-width="1.8"/></svg>
<div class="a" style="left:2636px;top:55px;width:237px;height:53px;background:#ececec;"></div>
<svg class="a" style="left:2652.5px;top:68.0px" width="27" height="27" viewBox="0 0 27 27"><circle cx="13.5" cy="13.5" r="13.5" fill="#9ccf8a"/><path d="M10 7.5H17M13.5 7.5V19.5M10 19.5H17" stroke="#234a23" stroke-width="2.1" fill="none"/></svg>
<div class="t" style="left:2691.5px;top:68.34px;font-family:'Liberation Sans', sans-serif;font-size:25px;color:#000;font-weight:normal;font-style:normal;letter-spacing:-0.905px;">Lifecycle.java</div>
<svg class="a" style="left:2844.5px;top:74.5px" width="15" height="15" viewBox="0 0 14 14"><path d="M1 1L13 13M13 1L1 13" stroke="#b5b5b5" stroke-width="1.8"/></svg>
<div class="a" style="left:2873px;top:55px;width:281px;height:53px;background:#eeeed8;"></div>
<svg class="a" style="left:2891.5px;top:66.5px" width="32" height="32" viewBox="0 0 32 32"><rect x="0" y="1.5" width="28" height="5.7" fill="#a9b1b8"/><rect x="0" y="23.5" width="28" height="5.8" fill="#a9b1b8"/><path d="M2.2 13.3L6.8 7.9L11.4 13.3Z M16.1 13.3L20.7 7.9L25.3 13.3Z" fill="#40a6d6"/><rect x="5.5" y="13" width="2.6" height="10.5" fill="#40a6d6"/><rect x="19.4" y="13" width="2.6" height="8" fill="#40a6d6"/><rect x="20.3" y="24.3" width="9.4" height="7" fill="#8f989f"/><path d="M22.6 24.5V21.5Q25 17.5 27.4 21.5V24.5" stroke="#8f989f" stroke-width="1.8" fill="none"/></svg>
<div class="t" style="left:2930.6px;top:68.34px;font-family:'Liberation Sans', sans-serif;font-size:25px;color:#000;font-weight:normal;font-style:normal;letter-spacing:-0.601px;">LifecycleListener</div>
<svg class="a" style="left:3122.3px;top:74.5px" width="15" height="15" viewBox="0 0 14 14"><path d="M1 1L13 13M13 1L1 13" stroke="#b5b5b5" stroke-width="1.8"/></svg>
<div class="a" style="left:3154px;top:55px;width:386px;height:53px;background:#ececec;"></div>
<svg class="a" style="left:3169.5px;top:68.0px" width="27" height="27" viewBox="0 0 27 27"><circle cx="13.5" cy="13.5" r="13.5" fill="#86cbea"/><path d="M18 9.6A6 6 0 1 0 18 17.4" stroke="#1f3f50" stroke-width="2.4" fill="none"/></svg>
<div class="a" style="left:3168.0px;top:65.5px;width:11px;height:7px;background:#98a4ac;border-radius:4px;transform:rotate(-40deg);"></div>
<div class="t" style="left:3208px;top:68.34px;font-family:'Liberation Sans', sans-serif;font-size:25px;color:#000;font-weight:normal;font-style:normal;letter-spacing:-0.818px;">StandardServer.java</div>
<svg class="a" style="left:3433.9px;top:74.5px" width="15" height="15" viewBox="0 0 14 14"><path d="M1 1L13 13M13 1L1 13" stroke="#b5b5b5" stroke-width="1.8"/></svg>
<div class="a" style="left:2308px;top:104px;width:328px;height:4px;background:#8c9bb0;"></div>
<div class="a" style="left:969px;top:108px;width:2571px;height:1px;background:#c9c9c9;"></div>
<div class="a" style="left:969px;top:109px;width:2571px;height:1540px;background:#ffffff;"></div>
<div class="a" style="left:969px;top:109px;width:132px;height:1540px;background:#f0f0f0;"></div>
<div class="a" style="left:969px;top:109px;width:1px;height:1540px;background:#cfcfcf;"></div>
<div class="a" style="left:1101px;top:109px;width:1px;height:1540px;background:#d6d6d6;"></div>
<div class="a" style="left:970px;top:680px;width:131px;height:56px;background:#fcf8e0;"></div>
<div class="a" style="left:1102px;top:680px;width:2415px;height:56px;background:#fffae3;"></div>
<div class="t mono" style="left:979px;top:135.25px;font-family:'Liberation Mono', monospace;font-size:33.33px;color:#999999;font-weight:normal;font-style:normal;letter-spacing:0px;">19</div>
<div class="t mono" style="left:1116px;top:135.25px;font-family:'Liberation Mono', monospace;font-size:33.33px;color:#000;font-weight:normal;font-style:normal;letter-spacing:0px;"><span style="color:#000080;font-weight:bold">package</span><span style="color:#000"> org.apache.catalina;</span></div>
<div class="t mono" style="left:979px;top:191.25px;font-family:'Liberation Mono', monospace;font-size:33.33px;color:#999999;font-weight:normal;font-style:normal;letter-spacing:0px;">20</div>
<div class="t mono" style="left:979px;top:247.25px;font-family:'Liberation Mono', monospace;font-size:33.33px;color:#999999;font-weight:normal;font-style:normal;letter-spacing:0px;">21</div>
<div class="t mono" style="left:979px;top:303.25px;font-family:'Liberation Mono', monospace;font-size:33.33px;color:#999999;font-weight:normal;font-style:normal;letter-spacing:0px;">22</div>
<div class="t mono" style="left:1116px;top:303.25px;font-family:'Liberation Mono', monospace;font-size:33.33px;color:#000;font-weight:normal;font-style:normal;letter-spacing:0px;"><span style="color:#808080;font-style:italic">/**</span></div>
<div class="t mono" style="left:979px;top:359.25px;font-family:'Liberation Mono', monospace;font-size:33.33px;color:#999999;font-weight:normal;font-style:normal;letter-spacing:0px;">23</div>
<div class="t mono" style="left:1116px;top:359.25px;font-family:'Liberation Mono', monospace;font-size:33.33px;color:#000;font-weight:normal;font-style:normal;letter-spacing:0px;"><span style="color:#808080;font-style:italic"> * Interface defining a listener for significant events (including "component</span></div>
<div class="t mono" style="left:979px;top:415.25px;font-family:'Liberation Mono', monospace;font-size:33.33px;color:#999999;font-weight:normal;font-style:normal;letter-spacing:0px;">24</div>
<div class="t mono" style="left:1116px;top:415.25px;font-family:'Liberation Mono', monospace;font-size:33.33px;color:#000;font-weight:normal;font-style:normal;letter-spacing:0px;"><span style="color:#808080;font-style:italic"> * start" and "component stop" generated by a component that implements the</span></div>
<div class="t mono" style="left:979px;top:471.25px;font-family:'Liberation Mono', monospace;font-size:33.33px;color:#999999;font-weight:normal;font-style:normal;letter-spacing:0px;">25</div>
<div class="t mono" style="left:1116px;top:471.25px;font-family:'Liberation Mono', monospace;font-size:33.33px;color:#000;font-weight:normal;font-style:normal;letter-spacing:0px;"><span style="color:#808080;font-style:italic"> * Lifecycle interface. The listener will be fired after the associated state</span></div>
<div class="t mono" style="left:979px;top:527.25px;font-family:'Liberation Mono', monospace;font-size:33.33px;color:#999999;font-weight:normal;font-style:normal;letter-spacing:0px;">26</div>
<div class="t mono" style="left:1116px;top:527.25px;font-family:'Liberation Mono', monospace;font-size:33.33px;color:#000;font-weight:normal;font-style:normal;letter-spacing:0px;"><span style="color:#808080;font-style:italic"> * change has taken place.</span></div>
<div class="t mono" style="left:979px;top:583.25px;font-family:'Liberation Mono', monospace;font-size:33.33px;color:#999999;font-weight:normal;font-style:normal;letter-spacing:0px;">27</div>
<div class="t mono" style="left:1116px;top:583.25px;font-family:'Liberation Mono', monospace;font-size:33.33px;color:#000;font-weight:normal;font-style:normal;letter-spacing:0px;"><span style="color:#808080;font-style:italic"> *</span></div>
<div class="t mono" style="left:979px;top:639.25px;font-family:'Liberation Mono', monospace;font-size:33.33px;color:#999999;font-weight:normal;font-style:normal;letter-spacing:0px;">28</div>
<div class="t mono" style="left:1116px;top:639.25px;font-family:'Liberation Mono', monospace;font-size:33.33px;color:#000;font-weight:normal;font-style:normal;letter-spacing:0px;"><span style="color:#808080;font-style:italic"> * </span><span style="color:#808080;font-style:italic;font-weight:bold;text-decoration:underline;text-underline-offset:4px;">@author</span><span style="color:#808080;font-style:italic"> Craig R. McClanahan</span></div>
<div class="t mono" style="left:979px;top:695.25px;font-family:'Liberation Mono', monospace;font-size:33.33px;color:#999999;font-weight:normal;font-style:normal;letter-spacing:0px;">29</div>
<div class="t mono" style="left:1116px;top:695.25px;font-family:'Liberation Mono', monospace;font-size:33.33px;color:#000;font-weight:normal;font-style:normal;letter-spacing:0px;"><span style="color:#808080;font-style:italic"> */</span></div>
<div class="t mono" style="left:979px;top:751.25px;font-family:'Liberation Mono', monospace;font-size:33.33px;color:#999999;font-weight:normal;font-style:normal;letter-spacing:0px;">30</div>
<div class="t mono" style="left:1116px;top:751.25px;font-family:'Liberation Mono', monospace;font-size:33.33px;color:#000;font-weight:normal;font-style:normal;letter-spacing:0px;"><span style="color:#000080;font-weight:bold">public</span><span style="color:#000"> </span><span style="color:#000080;font-weight:bold">interface</span><span style="color:#000"> LifecycleListener {</span></div>
<div class="t mono" style="left:979px;top:807.25px;font-family:'Liberation Mono', monospace;font-size:33.33px;color:#999999;font-weight:normal;font-style:normal;letter-spacing:0px;">31</div>
<div class="t mono" style="left:979px;top:863.25px;font-family:'Liberation Mono', monospace;font-size:33.33px;color:#999999;font-weight:normal;font-style:normal;letter-spacing:0px;">32</div>
<div class="t mono" style="left:979px;top:919.25px;font-family:'Liberation Mono', monospace;font-size:33.33px;color:#999999;font-weight:normal;font-style:normal;letter-spacing:0px;">33</div>
<div class="t mono" style="left:979px;top:975.25px;font-family:'Liberation Mono', monospace;font-size:33.33px;color:#999999;font-weight:normal;font-style:normal;letter-spacing:0px;">34</div>
<div class="t mono" style="left:979px;top:1031.25px;font-family:'Liberation Mono', monospace;font-size:33.33px;color:#999999;font-weight:normal;font-style:normal;letter-spacing:0px;">35</div>
<div class="t mono" style="left:979px;top:1087.25px;font-family:'Liberation Mono', monospace;font-size:33.33px;color:#999999;font-weight:normal;font-style:normal;letter-spacing:0px;">36</div>
<div class="t mono" style="left:979px;top:1143.25px;font-family:'Liberation Mono', monospace;font-size:33.33px;color:#999999;font-weight:normal;font-style:normal;letter-spacing:0px;">37</div>
<div class="t mono" style="left:979px;top:1199.25px;font-family:'Liberation Mono', monospace;font-size:33.33px;color:#999999;font-weight:normal;font-style:normal;letter-spacing:0px;">38</div>
<div class="t mono" style="left:979px;top:1255.25px;font-family:'Liberation Mono', monospace;font-size:33.33px;color:#999999;font-weight:normal;font-style:normal;letter-spacing:0px;">39</div>
<div class="t mono" style="left:979px;top:1311.25px;font-family:'Liberation Mono', monospace;font-size:33.33px;color:#999999;font-weight:normal;font-style:normal;letter-spacing:0px;">40</div>
<div class="t mono" style="left:979px;top:1367.25px;font-family:'Liberation Mono', monospace;font-size:33.33px;color:#999999;font-weight:normal;font-style:normal;letter-spacing:0px;">41</div>
<div class="t mono" style="left:979px;top:1423.25px;font-family:'Liberation Mono', monospace;font-size:33.33px;color:#999999;font-weight:normal;font-style:normal;letter-spacing:0px;">42</div>
<div class="t mono" style="left:1116px;top:919.25px;font-family:'Liberation Mono', monospace;font-size:33.33px;color:#808080;font-weight:normal;font-style:italic;letter-spacing:0px;">    /**</div>
<div class="t mono" style="left:1116px;top:975.25px;font-family:'Liberation Mono', monospace;font-size:33.33px;color:#808080;font-weight:normal;font-style:italic;letter-spacing:0px;">     * Acknowledge the occurrence of the specified event.</div>
<div class="t mono" style="left:1116px;top:1031.25px;font-family:'Liberation Mono', monospace;font-size:33.33px;color:#808080;font-weight:normal;font-style:italic;letter-spacing:0px;">     *</div>
<div class="t mono" style="left:1116px;top:1087.25px;font-family:'Liberation Mono', monospace;font-size:33.33px;color:#808080;font-weight:normal;font-style:italic;letter-spacing:0px;">     * @param event LifecycleEvent that has occurred</div>
<div class="t mono" style="left:1116px;top:1143.25px;font-family:'Liberation Mono', monospace;font-size:33.33px;color:#808080;font-weight:normal;font-style:italic;letter-spacing:0px;">     */</div>
<div class="t mono" style="left:1116px;top:1199.25px;font-family:'Liberation Mono', monospace;font-size:33.33px;color:#000000;font-weight:normal;font-style:normal;letter-spacing:0px;">    public void lifecycleEvent(LifecycleEvent event);</div>
<div class="t mono" style="left:1116px;top:1367.25px;font-family:'Liberation Mono', monospace;font-size:33.33px;color:#000000;font-weight:normal;font-style:normal;letter-spacing:0px;">}</div>
<svg class="a" style="left:1038px;top:302px" width="30" height="26" viewBox="0 0 30 26"><rect x="0" y="0" width="3.5" height="26" fill="#a8a8a8"/><rect x="8" y="2" width="22" height="4" fill="#a8a8a8"/><rect x="8" y="10" width="22" height="4" fill="#a8a8a8"/><rect x="8" y="18" width="14" height="4" fill="#a8a8a8"/></svg>
<svg class="a" style="left:1090px;top:306px" width="24" height="28" viewBox="0 0 24 28"><path d="M2 1H22V19L12 27L2 19Z" fill="#fff" stroke="#c2c2c2" stroke-width="1.5"/><path d="M7 11H17" stroke="#b0b0b0" stroke-width="1.5"/></svg>
<svg class="a" style="left:1090px;top:694px" width="24" height="28" viewBox="0 0 24 28"><path d="M2 27H22V9L12 1L2 9Z" fill="#fff" stroke="#c2c2c2" stroke-width="1.5"/><path d="M7 17H17" stroke="#b0b0b0" stroke-width="1.5"/></svg>
<svg class="a" style="left:1038.0px;top:754.0px" width="21" height="21" viewBox="0 0 27 27"><circle cx="13.5" cy="13.5" r="13.5" fill="#9ccf8a"/><path d="M10 7.5H17M13.5 7.5V19.5M10 19.5H17" stroke="#234a23" stroke-width="2.1" fill="none"/></svg>
<svg class="a" style="left:1055px;top:746px" width="16" height="36" viewBox="0 0 16 36"><path d="M8 0V33M2 26L8 34L14 26" stroke="#555" stroke-width="2.6" fill="none"/></svg>
<svg class="a" style="left:1038px;top:918px" width="12" height="26" viewBox="0 0 12 26"><rect x="0" y="0" width="3.5" height="26" fill="#a8a8a8"/><rect x="8" y="2" width="4" height="4" fill="#a8a8a8"/><rect x="8" y="10" width="4" height="4" fill="#a8a8a8"/><rect x="8" y="18" width="4" height="4" fill="#a8a8a8"/></svg>
<div class="a" style="left:1038px;top:1202px;width:11px;height:22px;overflow:hidden;"><div class="a" style="left:0;top:0;width:22px;height:22px;border-radius:50%;background:#8bc57a;"></div></div>
<div class="a" style="left:3517px;top:109px;width:1px;height:1540px;background:#e6e6e6;"></div>
<div class="a" style="left:3518px;top:281px;width:16px;height:1283px;background:#c6c6c6;border-radius:8px;"></div>
<div class="a" style="left:3517px;top:114px;width:19px;height:20px;background:#ecc13e;"></div>
<div class="a" style="left:3512px;top:1176px;width:28px;height:3px;background:#e0b83a;"></div>
<div class="a" style="left:3539px;top:55px;width:1px;height:1594px;background:#c9c9c9;"></div>
<div class="a" style="left:3540px;top:55px;width:40px;height:1888px;background:#f2f2f2;"></div>
<div class="t" style="left:3547px;top:70px;font-family:'Liberation Sans',sans-serif;font-size:31px;font-weight:bold;font-style:italic;color:#6e6e6e;">m</div>
<div class="vt" style="left:3573px;top:110px;font-size:23.5px;color:#000;transform:rotate(90deg);"><span style="letter-spacing:-0.6px">Maven</span></div>
<svg class="a" style="left:3548px;top:219px" width="24" height="26" viewBox="0 0 24 26"><ellipse cx="12" cy="4" rx="10" ry="4" fill="#6e6e6e"/><path d="M2 8Q12 13 22 8V12Q12 17 2 12Z M2 15Q12 20 22 15V19Q12 24 2 19Z" fill="#6e6e6e"/></svg>
<div class="vt" style="left:3573px;top:254px;font-size:24px;color:#000;transform:rotate(90deg);">Database</div>
<svg class="a" style="left:3548px;top:394px" width="24" height="24" viewBox="0 0 24 24"><ellipse cx="12" cy="6" rx="4" ry="4" fill="#6e6e6e"/><ellipse cx="12" cy="16" rx="5" ry="7" fill="#6e6e6e"/><path d="M1 8L8 12M23 8L16 12M1 18L7 16M23 18L17 16M3 1L9 5M21 1L15 5" stroke="#6e6e6e" stroke-width="2"/></svg>
<div class="vt" style="left:3573px;top:428px;font-size:24px;color:#000;transform:rotate(90deg);">Ant</div>
<div class="a" style="left:40px;top:1649px;width:3499px;height:294px;background:#f2f2f2;"></div>
<div class="a" style="left:40px;top:1649px;width:3499px;height:53px;background:#ececec;"></div>
<div class="a" style="left:40px;top:1649px;width:3499px;height:1px;background:#c9c9c9;"></div>
<div class="a" style="left:40px;top:1702px;width:3499px;height:2px;background:#cacaca;"></div>
<div class="t" style="left:51.6px;top:1664.34px;font-family:'Liberation Sans', sans-serif;font-size:25px;color:#1a1a1a;font-weight:normal;font-style:normal;letter-spacing:0.369px;">Sequence Diagram:</div>
<div class="t" style="left:313.0px;top:1664.34px;font-family:'Liberation Sans', sans-serif;font-size:25px;color:#1a1a1a;font-weight:normal;font-style:normal;letter-spacing:0.917px;">Open...</div>
<svg class="a" style="left:412.0px;top:1669.5px" width="15" height="15" viewBox="0 0 14 14"><path d="M1 1L13 13M13 1L1 13" stroke="#b5b5b5" stroke-width="1.8"/></svg>
<div class="t" style="left:472.6px;top:1664.34px;font-family:'Liberation Sans', sans-serif;font-size:25px;color:#1a1a1a;font-weight:normal;font-style:normal;letter-spacing:0.712px;">Bootstrap.start()</div>
<svg class="a" style="left:675.5px;top:1669.5px" width="15" height="15" viewBox="0 0 14 14"><path d="M1 1L13 13M13 1L1 13" stroke="#b5b5b5" stroke-width="1.8"/></svg>
<div class="t" style="left:736.4px;top:1664.34px;font-family:'Liberation Sans', sans-serif;font-size:25px;color:#1a1a1a;font-weight:normal;font-style:normal;letter-spacing:0.72px;">Bootstrap.main()</div>
<svg class="a" style="left:944.5px;top:1669.5px" width="15" height="15" viewBox="0 0 14 14"><path d="M1 1L13 13M13 1L1 13" stroke="#b5b5b5" stroke-width="1.8"/></svg>
<div class="t" style="left:1003.5px;top:1664.34px;font-family:'Liberation Sans', sans-serif;font-size:25px;color:#1a1a1a;font-weight:normal;font-style:normal;letter-spacing:0.8px;">Bootstrap.main()</div>
<svg class="a" style="left:1210.5px;top:1669.5px" width="15" height="15" viewBox="0 0 14 14"><path d="M1 1L13 13M13 1L1 13" stroke="#b5b5b5" stroke-width="1.8"/></svg>
<div class="t" style="left:1275px;top:1664.34px;font-family:'Liberation Sans', sans-serif;font-size:25px;color:#1a1a1a;font-weight:normal;font-style:normal;letter-spacing:0.8px;">Catalina.load()</div>
<svg class="a" style="left:1462.5px;top:1669.5px" width="15" height="15" viewBox="0 0 14 14"><path d="M1 1L13 13M13 1L1 13" stroke="#b5b5b5" stroke-width="1.8"/></svg>
<svg class="a" style="left:3449px;top:1664px" width="26" height="26" viewBox="0 0 24 24"><path fill="#6e6e6e" d="M19.4 13c.04-.33.06-.66.06-1s-.02-.67-.06-1l2.1-1.65c.19-.15.24-.42.12-.64l-2-3.46c-.12-.22-.39-.3-.61-.22l-2.49 1c-.52-.4-1.08-.73-1.69-.98l-.38-2.65C14.46 2.18 14.25 2 14 2h-4c-.25 0-.46.18-.49.42l-.38 2.65c-.61.25-1.17.59-1.69.98l-2.49-1c-.23-.09-.49 0-.61.22l-2 3.46c-.13.22-.07.49.12.64L4.57 11c-.04.33-.07.67-.07 1s.03.67.07 1l-2.11 1.65c-.19.15-.24.42-.12.64l2 3.46c.12.22.39.3.61.22l2.49-1c.52.4 1.08.73 1.69.98l.38 2.65c.03.24.24.42.49.42h4c.25 0 .46-.18.49-.42l.38-2.65c.61-.25 1.17-.59 1.69-.98l2.49 1c.23.09.49 0 .61-.22l2-3.46c.12-.22.07-.49-.12-.64L19.4 13zM12 15.5c-1.93 0-3.5-1.57-3.5-3.5s1.57-3.5 3.5-3.5 3.5 1.57 3.5 3.5-1.57 3.5-3.5 3.5z"/></svg>
<div class="a" style="left:3502px;top:1675px;width:25px;height:3px;background:#6e6e6e;"></div>
<div class="a" style="left:96px;top:1704px;width:1px;height:239px;background:#cfcfcf;"></div>
<svg class="a" style="left:55px;top:1723px" width="26" height="20" viewBox="0 0 26 20"><path d="M0 0L12 10L0 20Z M13 0L25 10L13 20Z" fill="#6e6e6e"/></svg>
<svg class="a" style="left:54px;top:1772px" width="28" height="28" viewBox="0 0 28 28"><path d="M6 6H24V26H6V20" fill="none" stroke="#6e6e6e" stroke-width="2.5"/><path d="M2 12L10 4V9H18V15H10V20Z" fill="#6e6e6e"/></svg>
<svg class="a" style="left:55px;top:1823px" width="26" height="30" viewBox="0 0 26 30"><path d="M7 1H25V29H1V7Z" fill="none" stroke="#6e6e6e" stroke-width="2"/><path d="M1 7H7V1" fill="none" stroke="#6e6e6e" stroke-width="2"/><path d="M8 11H18M13 11V23M10 23H16" stroke="#6e6e6e" stroke-width="2"/></svg>
<svg class="a" style="left:55px;top:1876px" width="26" height="30" viewBox="0 0 26 30"><path d="M7 1H25V29H1V7Z" fill="none" stroke="#c8c8c8" stroke-width="2"/><path d="M1 7H7V1" fill="none" stroke="#c8c8c8" stroke-width="2"/><path d="M8 11H18M13 11V23M10 23H16" stroke="#c8c8c8" stroke-width="2"/></svg>
<div class="a" style="left:97px;top:1705px;width:3419px;height:211px;background:#ffffff;"></div>
<div class="a" style="left:97px;top:1705px;width:3419px;height:1px;background:#c6c6c6;"></div>
<div class="a" style="left:3516px;top:1705px;width:20px;height:211px;background:#ffffff;"></div>
<div class="a" style="left:3516px;top:1764px;width:20px;height:152px;background:#f5f5f5;"></div>
<div class="a" style="left:3516px;top:1832px;width:18px;height:45px;background:#f7f7f7;border:1px solid #cfcfcf;border-radius:5px;box-sizing:border-box;"></div>
<svg class="a" style="left:3514px;top:1920px" width="24" height="16" viewBox="0 0 24 16"><path d="M1 8Q12 -3 23 8Q12 19 1 8Z" fill="none" stroke="#888" stroke-width="1.8"/><circle cx="12" cy="8" r="3" fill="none" stroke="#888" stroke-width="1.8"/></svg>
<div class="a" style="left:3536px;top:1704px;width:3px;height:239px;background:#f2f2f2;"></div>
<div class="a" style="left:3539px;top:1649px;width:1px;height:294px;background:#c9c9c9;"></div>
<svg class="a" style="left:97px;top:1706px" width="3419" height="210" viewBox="97 1706 3419 210">
<path d="M148.2 1763V1766M148.2 1776V1910" stroke="#111" stroke-width="2.4" stroke-dasharray="25.2 10.8"/>
<path d="M588.4 1763V1766M588.4 1776V1910" stroke="#111" stroke-width="2.4" stroke-dasharray="25.2 10.8"/>
<path d="M852.7 1763V1766M852.7 1776V1910" stroke="#111" stroke-width="2.4" stroke-dasharray="25.2 10.8"/>
<path d="M982 1763V1766M982 1776V1910" stroke="#111" stroke-width="2.4" stroke-dasharray="25.2 10.8"/>
<rect x="241.5" y="1763" width="23" height="160" fill="#f9dca4" stroke="#111" stroke-width="2"/>
<path d="M247.6 1763V1916" stroke="#111" stroke-width="2"/>
<rect x="254.2" y="1802" width="16.4" height="63" fill="#f9dca4" stroke="#111" stroke-width="2"/>
<path d="M271 1802.5H414.5V1818.4H274" fill="none" stroke="#111" stroke-width="2.2"/>
<path d="M271.5 1818.4L280 1812V1825Z" fill="#111"/>
<rect x="108.9" y="1716.9" width="76.9" height="45.3" fill="#fefdc4" stroke="#111" stroke-width="2"/>
<rect x="198.9" y="1716.9" width="103.1" height="45.3" fill="#fefdc4" stroke="#111" stroke-width="2"/>
<rect x="400.8" y="1716.9" width="374.2" height="45.3" fill="#fefdc4" stroke="#111" stroke-width="2"/>
<rect x="788.8" y="1716.9" width="124.80000000000007" height="45.3" fill="#cdf7cf" stroke="#111" stroke-width="2"/>
<rect x="926.7" y="1716.9" width="109.0" height="45.3" fill="#cdf7cf" stroke="#111" stroke-width="2"/>
</svg>
<div class="t" style="left:107.9px;top:1728.65375px;width:80.525px;text-align:center;font-size:22.5px;color:#3b3b2b;letter-spacing:1.625px;font-style:normal;">Actor</div>
<div class="t" style="left:197.9px;top:1728.65375px;width:105.75714285714285px;text-align:center;font-size:22.5px;color:#3b3b2b;letter-spacing:0.657px;font-style:normal;">Catalina</div>
<div class="t" style="left:399.8px;top:1728.65375px;width:376.93333333333334px;text-align:center;font-size:22.5px;color:#3b3b2b;letter-spacing:0.733px;font-style:normal;">CatalinaBaseConfigurationSource</div>
<div class="t" style="left:787.8px;top:1728.65375px;width:127.36250000000007px;text-align:center;font-size:22.5px;color:#3b3b2b;letter-spacing:0.562px;font-style:italic;">ServerXml</div>
<div class="t" style="left:925.7px;top:1728.65375px;width:111.75px;text-align:center;font-size:22.5px;color:#3b3b2b;letter-spacing:0.750px;font-style:italic;">Lifecycle</div>
<div class="t" style="left:281.1px;top:1766.65px;font-family:'Liberation Sans', sans-serif;font-size:22.5px;color:#111;font-weight:normal;font-style:normal;letter-spacing:0.52px;">1.3.5:createStopDigester</div>
<div class="a" style="left:280px;top:1880px;width:400px;height:36px;overflow:hidden;">
<div class="t" style="left:1.1px;top:14.75px;font-family:'Liberation Sans', sans-serif;font-size:22.5px;color:#111;font-weight:normal;font-style:normal;letter-spacing:0.52px;">1.3.6:generateClassHeader</div>
</div>
<div class="a" style="left:0px;top:1943px;width:3580px;height:44px;background:#f2f2f2;"></div>
<div class="a" style="left:0px;top:1943px;width:3580px;height:1px;background:#c9c9c9;"></div>
<div class="a" style="left:0px;top:1986px;width:3580px;height:1.5px;background:#c4c4c4;"></div>
<div class="a" style="left:0px;top:1987.5px;width:3580px;height:5px;background:#f6f6f6;"></div>
<div class="a" style="left:1286px;top:1945px;width:287px;height:41px;background:#c4c4c4;"></div>
<svg class="a" style="left:64px;top:1956px" width="21" height="20" viewBox="0 0 21 20"><rect x="0" y="1" width="4" height="3.5" fill="#6e6e6e"/><rect x="6" y="1" width="15" height="3.5" fill="#6e6e6e"/><rect x="0" y="8" width="4" height="3.5" fill="#6e6e6e"/><rect x="6" y="8" width="15" height="3.5" fill="#6e6e6e"/><rect x="0" y="15" width="4" height="3.5" fill="#6e6e6e"/><rect x="6" y="15" width="15" height="3.5" fill="#6e6e6e"/></svg>
<div class="t" style="left:93.45px;top:1955.45px;font-family:'Liberation Sans', sans-serif;font-size:22.5px;color:#000;font-weight:normal;font-style:normal;letter-spacing:0.675px;"><u>6</u>: TODO</div>
<svg class="a" style="left:229px;top:1954px" width="17" height="24" viewBox="0 0 17 24"><path d="M0 0L17 12L0 24Z" fill="#6e6e6e"/></svg>
<div class="t" style="left:260.0px;top:1955.45px;font-family:'Liberation Sans', sans-serif;font-size:22.5px;color:#000;font-weight:normal;font-style:normal;letter-spacing:0.9px;"><u>4</u>: Run</div>
<svg class="a" style="left:371px;top:1953px" width="26" height="26" viewBox="0 0 26 26"><circle cx="13" cy="13" r="11" fill="none" stroke="#d9303a" stroke-width="2.6"/><path d="M2 13H9L11 11L13 15L15 11L17 13H24" fill="none" stroke="#d9303a" stroke-width="2"/></svg>
<div class="t" style="left:405.0px;top:1955.45px;font-family:'Liberation Sans', sans-serif;font-size:22.5px;color:#000;font-weight:normal;font-style:normal;letter-spacing:0.812px;">SonarLint</div>
<svg class="a" style="left:551px;top:1955px" width="22" height="22" viewBox="0 0 22 22"><rect width="22" height="22" fill="#6e6e6e"/><path d="M4 5L9 9L4 13" stroke="#f2f2f2" stroke-width="1.8" fill="none"/><path d="M10 16H17" stroke="#f2f2f2" stroke-width="1.8"/></svg>
<div class="t" style="left:584px;top:1955.45px;font-family:'Liberation Sans', sans-serif;font-size:22.5px;color:#000;font-weight:normal;font-style:normal;letter-spacing:0.786px;">Terminal</div>
<svg class="a" style="left:714px;top:1953px" width="25" height="25" viewBox="0 0 25 25"><path d="M1 6L9 1L14 5L11 9L7 6L4 9Z" fill="#6e6e6e"/><path d="M9 6L23 21L20 24L6 9Z" fill="#6e6e6e"/></svg>
<div class="t" style="left:746px;top:1955.45px;font-family:'Liberation Sans', sans-serif;font-size:22.5px;color:#000;font-weight:normal;font-style:normal;letter-spacing:1.65px;">Build</div>
<svg class="a" style="left:845px;top:1957px" width="22" height="18" viewBox="0 0 22 18"><rect x="0" y="0" width="22" height="3.5" fill="#6e6e6e"/><rect x="0" y="7" width="14" height="3.5" fill="#6e6e6e"/><rect x="0" y="14" width="18" height="3.5" fill="#6e6e6e"/></svg>
<div class="t" style="left:878.4px;top:1955.45px;font-family:'Liberation Sans', sans-serif;font-size:22.5px;color:#000;font-weight:normal;font-style:normal;letter-spacing:0.91px;"><u>0</u>: Messages</div>
<svg class="a" style="left:1063px;top:1954px" width="23" height="24" viewBox="0 0 23 24"><rect x="0" y="0" width="19" height="20" fill="#6e6e6e"/><rect x="3" y="4" width="13" height="13" fill="#f2f2f2"/><rect x="8" y="10" width="15" height="14" fill="#6e6e6e"/><path d="M10 13H14M10 16.5H14M10 20H14M16 13H20M16 16.5H20M16 20H20" stroke="#f2f2f2" stroke-width="1.2"/></svg>
<div class="t" style="left:1095px;top:1955.45px;font-family:'Liberation Sans', sans-serif;font-size:22.5px;color:#000;font-weight:normal;font-style:normal;letter-spacing:0.821px;">Java Enterprise</div>
<svg class="a" style="left:1311px;top:1953px" width="27" height="26" viewBox="0 0 27 26"><path d="M1 7H8M5 4L8 7L5 10" stroke="#555" stroke-width="1.6" fill="none"/><rect x="10" y="1" width="7" height="24" fill="#e8c46a" stroke="#555" stroke-width="1.4"/><path d="M17 19H26M23 16L26 19L23 22" stroke="#555" stroke-width="1.6" fill="none"/></svg>
<div class="t" style="left:1345.4px;top:1955.45px;font-family:'Liberation Sans', sans-serif;font-size:22.5px;color:#000;font-weight:normal;font-style:normal;letter-spacing:0.78px;">Sequence Diagram</div>
<div class="a" style="left:3379px;top:1953px;width:24px;height:24px;background:#59a860;border-radius:12px 12px 12px 0;"></div>
<div class="t" style="left:3379px;top:1956px;width:24px;text-align:center;font-size:19px;font-weight:bold;color:#fff;">2</div>
<div class="t" style="left:3411px;top:1955.45px;font-family:'Liberation Sans', sans-serif;font-size:22.5px;color:#000;font-weight:normal;font-style:normal;letter-spacing:0.6px;">Event Log</div>
<div class="a" style="left:1049px;top:913px;width:2179px;height:831px;box-shadow:0 12px 40px rgba(0,0,0,0.22);"></div>
<div class="a" style="left:1049px;top:913px;width:2179px;height:831px;background:rgba(255,255,255,0.955);border:1px solid #c2c2c2;box-sizing:border-box;overflow:hidden;">
<div class="a" style="left:0px;top:0px;width:2178px;height:56px;background:rgba(226,226,226,0.94);"></div>
<div class="t" style="left:711px;top:12.297999999999998px;font-size:28px;color:#000;letter-spacing:0.1px;">Choose Implementation of <b>LifecycleListener</b> (24 found)</div>
<svg class="a" style="left:2142px;top:16px" width="24" height="24" viewBox="0 0 24 24"><rect x="1" y="1" width="22" height="22" fill="none" stroke="#555" stroke-width="1.8"/><rect x="1" y="15" width="10" height="8" fill="#555"/></svg>
<div class="a" style="left:2150px;top:56px;width:27px;height:774px;background:rgba(244,244,244,0.94);"></div>
<div class="a" style="left:2156px;top:63px;width:16px;height:483px;background:#c6c6c6;border-radius:8px;"></div>
<div class="a" style="left:0px;top:56px;width:2150px;height:50px;background:rgba(57,117,215,0.96);"></div>
<svg class="a" style="left:16.199999999999953px;top:67.4px" width="27.2" height="27.2" viewBox="0 0 27 27"><circle cx="13.5" cy="13.5" r="13.5" fill="#4aa6e0"/><path d="M18 9.6A6 6 0 1 0 18 17.4" stroke="#1f3f50" stroke-width="2.4" fill="none"/></svg>
<div class="a" style="left:12.799999999999955px;top:66px;width:11px;height:7px;background:#b9c2c9;border-radius:4px;transform:rotate(-40deg);opacity:0.85"></div>
<div class="a" style="left:15.799999999999955px;top:85px;width:9px;height:9px;border:2px solid #aeb7be;background:#cfd6db;transform:rotate(45deg);box-sizing:border-box;"></div>
<div class="t mono" style="left:52px;top:66.05px;font-family:'Liberation Mono', monospace;font-size:33.33px;color:#000;font-weight:normal;font-style:normal;letter-spacing:0px;"><span style="color:#ffffff;">AccessLogListener in StandardEngine</span><span style="color:#ffffff"> (org.apache.catalina.core)</span></div>
<div class="t mono" style="left:1615px;top:66.05px;font-family:'Liberation Mono', monospace;font-size:33.33px;color:#ffffff;font-weight:normal;font-style:normal;letter-spacing:0px;">apache-tomcat-9.0.39-src</div>
<svg class="a" style="left:2106px;top:68px" width="31" height="30" viewBox="0 0 31 30"><path d="M0 0H10L13 4H28V22H0Z" fill="#8d9bab"/><rect x="18" y="17" width="12" height="12" fill="#3fb0e0"/></svg>
<svg class="a" style="left:16.199999999999953px;top:117.4px" width="27.2" height="27.2" viewBox="0 0 27 27"><circle cx="13.5" cy="13.5" r="13.5" fill="#86cbea"/><path d="M18 9.6A6 6 0 1 0 18 17.4" stroke="#1f3f50" stroke-width="2.4" fill="none"/></svg>
<div class="t mono" style="left:52px;top:116.05px;font-family:'Liberation Mono', monospace;font-size:33.33px;color:#000;font-weight:normal;font-style:normal;letter-spacing:0px;"><span style="color:#000000;">AprLifecycleListener</span><span style="color:#999999"> (org.apache.catalina.core)</span></div>
<div class="t mono" style="left:1615px;top:116.05px;font-family:'Liberation Mono', monospace;font-size:33.33px;color:#999999;font-weight:normal;font-style:normal;letter-spacing:0px;">apache-tomcat-9.0.39-src</div>
<svg class="a" style="left:2106px;top:118px" width="31" height="30" viewBox="0 0 31 30"><path d="M0 0H10L13 4H28V22H0Z" fill="#aab4be"/><rect x="18" y="17" width="12" height="12" fill="#3fb0e0"/></svg>
<svg class="a" style="left:16.199999999999953px;top:167.4px" width="27.2" height="27.2" viewBox="0 0 27 27"><circle cx="13.5" cy="13.5" r="13.5" fill="#86cbea"/><path d="M18 9.6A6 6 0 1 0 18 17.4" stroke="#1f3f50" stroke-width="2.4" fill="none"/></svg>
<div class="t mono" style="left:52px;top:166.05px;font-family:'Liberation Mono', monospace;font-size:33.33px;color:#000;font-weight:normal;font-style:normal;letter-spacing:0px;"><span style="color:#000000;">ContextConfig</span><span style="color:#999999"> (org.apache.catalina.startup)</span></div>
<div class="t mono" style="left:1615px;top:166.05px;font-family:'Liberation Mono', monospace;font-size:33.33px;color:#999999;font-weight:normal;font-style:normal;letter-spacing:0px;">apache-tomcat-9.0.39-src</div>
<svg class="a" style="left:2106px;top:168px" width="31" height="30" viewBox="0 0 31 30"><path d="M0 0H10L13 4H28V22H0Z" fill="#aab4be"/><rect x="18" y="17" width="12" height="12" fill="#3fb0e0"/></svg>
<svg class="a" style="left:16.199999999999953px;top:217.4px" width="27.2" height="27.2" viewBox="0 0 27 27"><circle cx="13.5" cy="13.5" r="13.5" fill="#86cbea"/><path d="M18 9.6A6 6 0 1 0 18 17.4" stroke="#1f3f50" stroke-width="2.4" fill="none"/></svg>
<div class="a" style="left:15.799999999999955px;top:235px;width:9px;height:9px;border:2px solid #aeb7be;background:#cfd6db;transform:rotate(45deg);box-sizing:border-box;"></div>
<div class="t mono" style="left:52px;top:216.05px;font-family:'Liberation Mono', monospace;font-size:33.33px;color:#000;font-weight:normal;font-style:normal;letter-spacing:0px;"><span style="color:#000000;">DefaultWebXmlListener in Tomcat</span><span style="color:#999999"> (org.apache.catalina.startup)</span></div>
<div class="t mono" style="left:1615px;top:216.05px;font-family:'Liberation Mono', monospace;font-size:33.33px;color:#999999;font-weight:normal;font-style:normal;letter-spacing:0px;">apache-tomcat-9.0.39-src</div>
<svg class="a" style="left:2106px;top:218px" width="31" height="30" viewBox="0 0 31 30"><path d="M0 0H10L13 4H28V22H0Z" fill="#aab4be"/><rect x="18" y="17" width="12" height="12" fill="#3fb0e0"/></svg>
<svg class="a" style="left:16.199999999999953px;top:267.4px" width="27.2" height="27.2" viewBox="0 0 27 27"><circle cx="13.5" cy="13.5" r="13.5" fill="#86cbea"/><path d="M18 9.6A6 6 0 1 0 18 17.4" stroke="#1f3f50" stroke-width="2.4" fill="none"/></svg>
<div class="t mono" style="left:52px;top:266.05px;font-family:'Liberation Mono', monospace;font-size:33.33px;color:#000;font-weight:normal;font-style:normal;letter-spacing:0px;"><span style="color:#000000;">EngineConfig</span><span style="color:#999999"> (org.apache.catalina.startup)</span></div>
<div class="t mono" style="left:1615px;top:266.05px;font-family:'Liberation Mono', monospace;font-size:33.33px;color:#999999;font-weight:normal;font-style:normal;letter-spacing:0px;">apache-tomcat-9.0.39-src</div>
<svg class="a" style="left:2106px;top:268px" width="31" height="30" viewBox="0 0 31 30"><path d="M0 0H10L13 4H28V22H0Z" fill="#aab4be"/><rect x="18" y="17" width="12" height="12" fill="#3fb0e0"/></svg>
<svg class="a" style="left:16.199999999999953px;top:317.4px" width="27.2" height="27.2" viewBox="0 0 27 27"><circle cx="13.5" cy="13.5" r="13.5" fill="#86cbea"/><path d="M18 9.6A6 6 0 1 0 18 17.4" stroke="#1f3f50" stroke-width="2.4" fill="none"/></svg>
<div class="a" style="left:15.799999999999955px;top:335px;width:9px;height:9px;border:2px solid #aeb7be;background:#cfd6db;transform:rotate(45deg);box-sizing:border-box;"></div>
<div class="t mono" style="left:52px;top:316.05px;font-family:'Liberation Mono', monospace;font-size:33.33px;color:#000;font-weight:normal;font-style:normal;letter-spacing:0px;"><span style="color:#000000;">ExpandedDirectoryRemovalListener in HostConfig</span><span style="color:#999999"> (org.apache.catalina.startup)</span></div>
<div class="t mono" style="left:1615px;top:316.05px;font-family:'Liberation Mono', monospace;font-size:33.33px;color:#999999;font-weight:normal;font-style:normal;letter-spacing:0px;">apache-tomcat-9.0.39-src</div>
<svg class="a" style="left:2106px;top:318px" width="31" height="30" viewBox="0 0 31 30"><path d="M0 0H10L13 4H28V22H0Z" fill="#aab4be"/><rect x="18" y="17" width="12" height="12" fill="#3fb0e0"/></svg>
<svg class="a" style="left:16.199999999999953px;top:367.4px" width="27.2" height="27.2" viewBox="0 0 27 27"><circle cx="13.5" cy="13.5" r="13.5" fill="#86cbea"/><path d="M18 9.6A6 6 0 1 0 18 17.4" stroke="#1f3f50" stroke-width="2.4" fill="none"/></svg>
<div class="a" style="left:15.799999999999955px;top:385px;width:9px;height:9px;border:2px solid #aeb7be;background:#cfd6db;transform:rotate(45deg);box-sizing:border-box;"></div>
<div class="t mono" style="left:52px;top:366.05px;font-family:'Liberation Mono', monospace;font-size:33.33px;color:#000;font-weight:normal;font-style:normal;letter-spacing:0px;"><span style="color:#000000;">FixContextListener in Tomcat</span><span style="color:#999999"> (org.apache.catalina.startup)</span></div>
<div class="t mono" style="left:1615px;top:366.05px;font-family:'Liberation Mono', monospace;font-size:33.33px;color:#999999;font-weight:normal;font-style:normal;letter-spacing:0px;">apache-tomcat-9.0.39-src</div>
<svg class="a" style="left:2106px;top:368px" width="31" height="30" viewBox="0 0 31 30"><path d="M0 0H10L13 4H28V22H0Z" fill="#aab4be"/><rect x="18" y="17" width="12" height="12" fill="#3fb0e0"/></svg>
<svg class="a" style="left:16.199999999999953px;top:417.4px" width="27.2" height="27.2" viewBox="0 0 27 27"><circle cx="13.5" cy="13.5" r="13.5" fill="#86cbea"/><path d="M18 9.6A6 6 0 1 0 18 17.4" stroke="#1f3f50" stroke-width="2.4" fill="none"/></svg>
<div class="a" style="left:14.799999999999955px;top:418px;width:30px;height:26px;border-left:2px solid #9aa;border-right:2px solid #9aa;border-radius:40%;box-sizing:border-box;"></div>
<div class="t mono" style="left:52px;top:416.05px;font-family:'Liberation Mono', monospace;font-size:33.33px;color:#000;font-weight:normal;font-style:normal;letter-spacing:0px;"><span style="color:#000000;">FrameworkListener</span><span style="color:#999999"> (org.apache.catalina.core)</span></div>
<div class="t mono" style="left:1615px;top:416.05px;font-family:'Liberation Mono', monospace;font-size:33.33px;color:#999999;font-weight:normal;font-style:normal;letter-spacing:0px;">apache-tomcat-9.0.39-src</div>
<svg class="a" style="left:2106px;top:418px" width="31" height="30" viewBox="0 0 31 30"><path d="M0 0H10L13 4H28V22H0Z" fill="#aab4be"/><rect x="18" y="17" width="12" height="12" fill="#3fb0e0"/></svg>
<svg class="a" style="left:16.199999999999953px;top:467.4px" width="27.2" height="27.2" viewBox="0 0 27 27"><circle cx="13.5" cy="13.5" r="13.5" fill="#86cbea"/><path d="M18 9.6A6 6 0 1 0 18 17.4" stroke="#1f3f50" stroke-width="2.4" fill="none"/></svg>
<div class="t mono" style="left:52px;top:466.05px;font-family:'Liberation Mono', monospace;font-size:33.33px;color:#000;font-weight:normal;font-style:normal;letter-spacing:0px;"><span style="color:#000000;">GlobalResourcesLifecycleListener</span><span style="color:#999999"> (org.apache.catalina.mbeans)</span></div>
<div class="t mono" style="left:1615px;top:466.05px;font-family:'Liberation Mono', monospace;font-size:33.33px;color:#999999;font-weight:normal;font-style:normal;letter-spacing:0px;">apache-tomcat-9.0.39-src</div>
<svg class="a" style="left:2106px;top:468px" width="31" height="30" viewBox="0 0 31 30"><path d="M0 0H10L13 4H28V22H0Z" fill="#aab4be"/><rect x="18" y="17" width="12" height="12" fill="#3fb0e0"/></svg>
<svg class="a" style="left:16.199999999999953px;top:517.4px" width="27.2" height="27.2" viewBox="0 0 27 27"><circle cx="13.5" cy="13.5" r="13.5" fill="#86cbea"/><path d="M18 9.6A6 6 0 1 0 18 17.4" stroke="#1f3f50" stroke-width="2.4" fill="none"/></svg>
<div class="t mono" style="left:52px;top:516.05px;font-family:'Liberation Mono', monospace;font-size:33.33px;color:#000;font-weight:normal;font-style:normal;letter-spacing:0px;"><span style="color:#000000;">HeartbeatListener</span><span style="color:#999999"> (org.apache.catalina.ha.backend)</span></div>
<div class="t mono" style="left:1615px;top:516.05px;font-family:'Liberation Mono', monospace;font-size:33.33px;color:#999999;font-weight:normal;font-style:normal;letter-spacing:0px;">apache-tomcat-9.0.39-src</div>
<svg class="a" style="left:2106px;top:518px" width="31" height="30" viewBox="0 0 31 30"><path d="M0 0H10L13 4H28V22H0Z" fill="#aab4be"/><rect x="18" y="17" width="12" height="12" fill="#3fb0e0"/></svg>
<svg class="a" style="left:16.199999999999953px;top:567.4px" width="27.2" height="27.2" viewBox="0 0 27 27"><circle cx="13.5" cy="13.5" r="13.5" fill="#86cbea"/><path d="M18 9.6A6 6 0 1 0 18 17.4" stroke="#1f3f50" stroke-width="2.4" fill="none"/></svg>
<div class="t mono" style="left:52px;top:566.05px;font-family:'Liberation Mono', monospace;font-size:33.33px;color:#000;font-weight:normal;font-style:normal;letter-spacing:0px;"><span style="color:#000000;">HostConfig</span><span style="color:#999999"> (org.apache.catalina.startup)</span></div>
<div class="t mono" style="left:1615px;top:566.05px;font-family:'Liberation Mono', monospace;font-size:33.33px;color:#999999;font-weight:normal;font-style:normal;letter-spacing:0px;">apache-tomcat-9.0.39-src</div>
<svg class="a" style="left:2106px;top:568px" width="31" height="30" viewBox="0 0 31 30"><path d="M0 0H10L13 4H28V22H0Z" fill="#aab4be"/><rect x="18" y="17" width="12" height="12" fill="#3fb0e0"/></svg>
<svg class="a" style="left:16.199999999999953px;top:617.4px" width="27.2" height="27.2" viewBox="0 0 27 27"><circle cx="13.5" cy="13.5" r="13.5" fill="#86cbea"/><path d="M18 9.6A6 6 0 1 0 18 17.4" stroke="#1f3f50" stroke-width="2.4" fill="none"/></svg>
<div class="a" style="left:15.799999999999955px;top:635px;width:9px;height:9px;border:2px solid #aeb7be;background:#cfd6db;transform:rotate(45deg);box-sizing:border-box;"></div>
<div class="t mono" style="left:52px;top:616.05px;font-family:'Liberation Mono', monospace;font-size:33.33px;color:#000;font-weight:normal;font-style:normal;letter-spacing:0px;"><span style="color:#000000;">HostWebXmlCacheCleaner in ContextConfig</span><span style="color:#999999"> (org.apache.catalina.startup)</span></div>
<div class="t mono" style="left:1615px;top:616.05px;font-family:'Liberation Mono', monospace;font-size:33.33px;color:#999999;font-weight:normal;font-style:normal;letter-spacing:0px;">apache-tomcat-9.0.39-src</div>
<svg class="a" style="left:2106px;top:618px" width="31" height="30" viewBox="0 0 31 30"><path d="M0 0H10L13 4H28V22H0Z" fill="#aab4be"/><rect x="18" y="17" width="12" height="12" fill="#3fb0e0"/></svg>
<svg class="a" style="left:16.199999999999953px;top:667.4px" width="27.2" height="27.2" viewBox="0 0 27 27"><circle cx="13.5" cy="13.5" r="13.5" fill="#86cbea"/><path d="M18 9.6A6 6 0 1 0 18 17.4" stroke="#1f3f50" stroke-width="2.4" fill="none"/></svg>
<div class="t mono" style="left:52px;top:666.05px;font-family:'Liberation Mono', monospace;font-size:33.33px;color:#000;font-weight:normal;font-style:normal;letter-spacing:0px;"><span style="color:#000000;text-decoration:line-through;">JmxRemoteLifecycleListener</span><span style="color:#999999"> (org.apache.catalina.mbeans)</span></div>
<div class="t mono" style="left:1615px;top:666.05px;font-family:'Liberation Mono', monospace;font-size:33.33px;color:#999999;font-weight:normal;font-style:normal;letter-spacing:0px;">apache-tomcat-9.0.39-src</div>
<svg class="a" style="left:2106px;top:668px" width="31" height="30" viewBox="0 0 31 30"><path d="M0 0H10L13 4H28V22H0Z" fill="#aab4be"/><rect x="18" y="17" width="12" height="12" fill="#3fb0e0"/></svg>
<svg class="a" style="left:16.199999999999953px;top:717.4px" width="27.2" height="27.2" viewBox="0 0 27 27"><circle cx="13.5" cy="13.5" r="13.5" fill="#86cbea"/><path d="M18 9.6A6 6 0 1 0 18 17.4" stroke="#1f3f50" stroke-width="2.4" fill="none"/></svg>
<div class="t mono" style="left:52px;top:716.05px;font-family:'Liberation Mono', monospace;font-size:33.33px;color:#000;font-weight:normal;font-style:normal;letter-spacing:0px;"><span style="color:#000000;">JniLifecycleListener</span><span style="color:#999999"> (org.apache.catalina.core)</span></div>
<div class="t mono" style="left:1615px;top:716.05px;font-family:'Liberation Mono', monospace;font-size:33.33px;color:#999999;font-weight:normal;font-style:normal;letter-spacing:0px;">apache-tomcat-9.0.39-src</div>
<svg class="a" style="left:2106px;top:718px" width="31" height="30" viewBox="0 0 31 30"><path d="M0 0H10L13 4H28V22H0Z" fill="#aab4be"/><rect x="18" y="17" width="12" height="12" fill="#3fb0e0"/></svg>
<svg class="a" style="left:16.199999999999953px;top:767.4px" width="27.2" height="27.2" viewBox="0 0 27 27"><circle cx="13.5" cy="13.5" r="13.5" fill="#86cbea"/><path d="M18 9.6A6 6 0 1 0 18 17.4" stroke="#1f3f50" stroke-width="2.4" fill="none"/></svg>
<div class="t mono" style="left:52px;top:766.05px;font-family:'Liberation Mono', monospace;font-size:33.33px;color:#000;font-weight:normal;font-style:normal;letter-spacing:0px;"><span style="color:#000000;">JreMemoryLeakPreventionListener</span><span style="color:#999999"> (org.apache.catalina.core)</span></div>
<div class="t mono" style="left:1615px;top:766.05px;font-family:'Liberation Mono', monospace;font-size:33.33px;color:#999999;font-weight:normal;font-style:normal;letter-spacing:0px;">apache-tomcat-9.0.39-src</div>
<svg class="a" style="left:2106px;top:768px" width="31" height="30" viewBox="0 0 31 30"><path d="M0 0H10L13 4H28V22H0Z" fill="#aab4be"/><rect x="18" y="17" width="12" height="12" fill="#3fb0e0"/></svg>
<svg class="a" style="left:16.199999999999953px;top:817.4px" width="27.2" height="27.2" viewBox="0 0 27 27"><circle cx="13.5" cy="13.5" r="13.5" fill="#86cbea"/><path d="M18 9.6A6 6 0 1 0 18 17.4" stroke="#1f3f50" stroke-width="2.4" fill="none"/></svg>
<div class="t mono" style="left:52px;top:816.05px;font-family:'Liberation Mono', monospace;font-size:33.33px;color:#000;font-weight:normal;font-style:normal;letter-spacing:0px;"><span style="color:#000000;">MapperListener</span><span style="color:#999999"> (org.apache.catalina.mapper)</span></div>
<div class="t mono" style="left:1615px;top:816.05px;font-family:'Liberation Mono', monospace;font-size:33.33px;color:#999999;font-weight:normal;font-style:normal;letter-spacing:0px;">apache-tomcat-9.0.39-src</div>
<svg class="a" style="left:2106px;top:818px" width="31" height="30" viewBox="0 0 31 30"><path d="M0 0H10L13 4H28V22H0Z" fill="#aab4be"/><rect x="18" y="17" width="12" height="12" fill="#3fb0e0"/></svg>
</div>
<div class="a" style="left:216.1px;top:290.5px;width:274.6px;height:47.19999999999999px;border:5.5px solid #e94f7e;box-sizing:border-box;"></div>
<div class="a" style="left:214.6px;top:780px;width:247.70000000000002px;height:41px;border:5.5px solid #e94f7e;box-sizing:border-box;"></div>
<div class="a" style="left:202.6px;top:848px;width:318.1px;height:58.299999999999955px;border:5.5px solid #e94f7e;box-sizing:border-box;"></div>
<div class="a" style="left:219.9px;top:1374.3px;width:233.49999999999997px;height:48.40000000000009px;border:5.5px solid #e94f7e;box-sizing:border-box;"></div>
<svg class="a" style="left:0;top:0" width="3580" height="1992" viewBox="0 0 3580 1992"><path d="M1645.8 799.3 L1167.7 962.0 L1176.9 974.0 L1142.0 964.0 L1164.0 935.1 L1163.8 950.2 L1644.2 794.7Z" fill="#e94f7e" stroke="#e94f7e" stroke-width="1.2" stroke-linejoin="round"/><circle cx="1645" cy="797" r="2.6" fill="#e94f7e"/></svg>
</body></html>
